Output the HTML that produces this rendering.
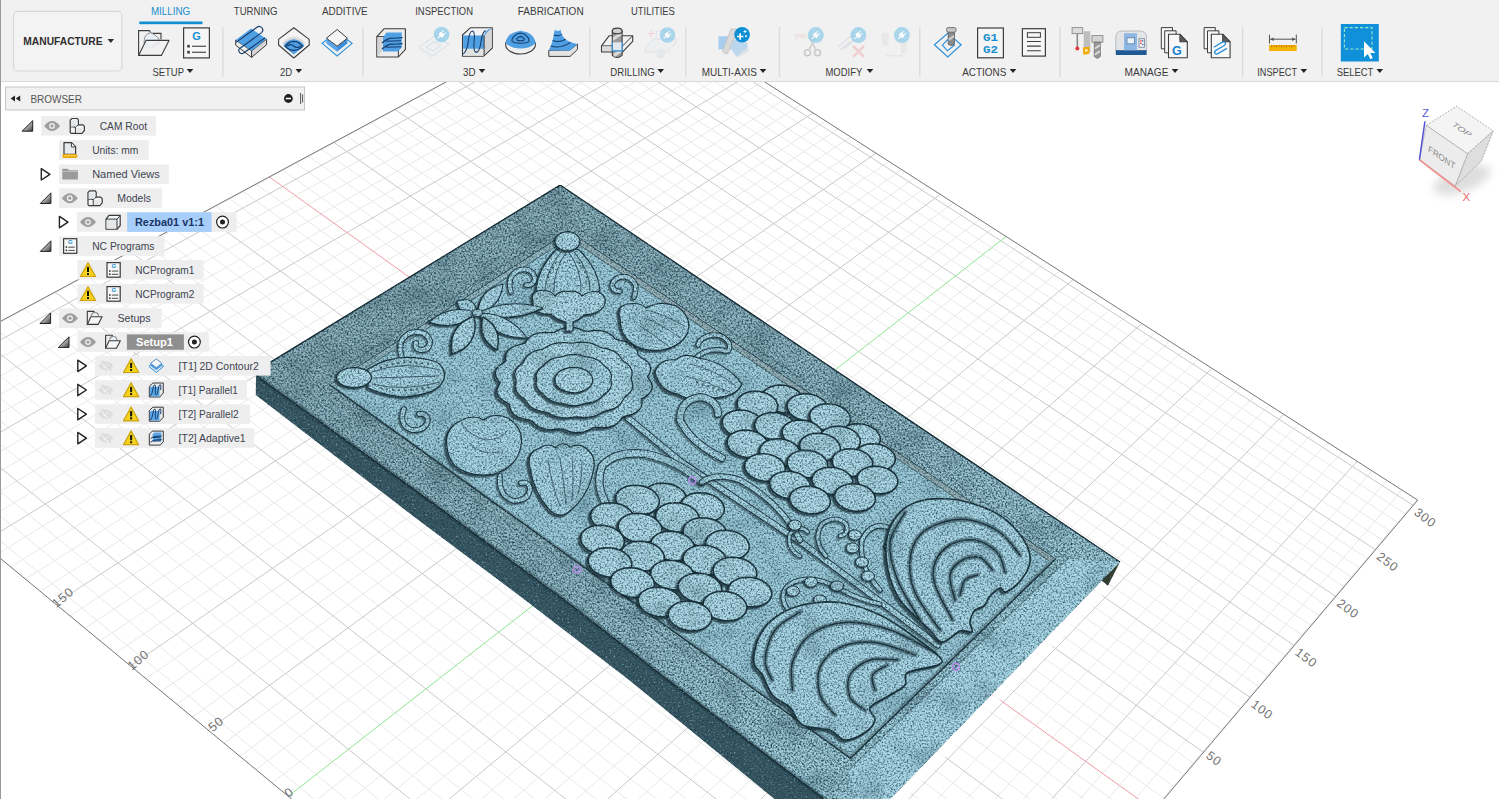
<!DOCTYPE html>
<html><head><meta charset="utf-8"><title>Fusion 360 - Manufacture</title>
<style>
html,body{margin:0;padding:0;background:#fff;}
body{width:1499px;height:799px;overflow:hidden;position:relative;font-family:"Liberation Sans",sans-serif;}
#canvas{position:absolute;left:0;top:0;width:1499px;height:799px;}
#toolbar{position:absolute;left:0;top:0;width:1499px;height:81px;background:#f1f1f1;border-bottom:1px solid #d9d9d9;}
#lborder{position:absolute;left:0;top:0;width:1px;height:799px;background:#9a9a9a;}
/*TOOLBAR_CSS*/
/*BROWSER_CSS*/
</style></head><body>
<svg id="canvas" width="1499" height="799" viewBox="0 0 1499 799">
<path d="M-172.8 415.3L619.9 -10.8M-145.4 438L643.3 4.2M-131.6 449.4L655.1 11.8M-161 408.2L814.2 1210.8M-117.7 460.9L667 19.4M-143.2 398.6L828.6 1193.8M-103.7 472.4L678.9 27M-125.6 389.2L842.9 1177.1M-75.6 495.6L702.8 42.3M-91.1 370.6L870.7 1144.3M-61.4 507.4L714.9 50M-74.1 361.5L884.4 1128.2M-47.1 519.2L727 57.8M-57.3 352.4L897.9 1112.3M-32.8 531L739.1 65.5M-40.7 343.5L911.2 1096.7M-3.8 554.9L763.5 81.2M-8 326L937.2 1066M10.8 567L775.8 89.1M8 317.3L950 1050.9M25.5 579.1L788.2 97M23.9 308.8L962.6 1036.1M40.2 591.3L800.6 104.9M39.6 300.4L975 1021.4M70 615.9L825.5 120.9M70.5 283.8L999.4 992.7M85 628.3L838.1 128.9M85.7 275.6L1011.4 978.6M100.1 640.8L850.7 137M100.8 267.5L1023.2 964.7M115.3 653.3L863.3 145.1M115.6 259.5L1034.9 950.9M145.9 678.7L888.8 161.4M144.9 243.8L1057.8 924M161.3 691.4L901.6 169.6M159.3 236L1069 910.7M176.9 704.3L914.5 177.9M173.6 228.4L1080.1 897.6M192.5 717.2L927.4 186.1M187.7 220.8L1091.1 884.7M224 743.2L953.4 202.8M215.5 205.9L1112.7 859.3M239.9 756.4L966.5 211.2M229.1 198.5L1123.2 846.9M255.9 769.6L979.7 219.6M242.7 191.2L1133.7 834.6M272 782.9L992.9 228M256.1 184L1144 822.4M304.5 809.7L1019.4 245.1M282.5 169.9L1164.3 798.5M320.9 823.3L1032.8 253.6M295.5 162.9L1174.3 786.7M337.4 836.9L1046.2 262.2M308.4 156L1184.2 775.1M353.9 850.6L1059.7 270.9M321.1 149.1L1193.9 763.6M387.4 878.2L1086.9 288.3M346.2 135.6L1213.1 741.1M404.3 892.2L1100.5 297M358.6 129L1222.5 730M421.3 906.2L1114.3 305.8M370.8 122.4L1231.8 719M438.3 920.3L1128.1 314.6M383 115.9L1241 708.2M472.8 948.8L1155.8 332.4M406.9 103L1259.1 686.8M490.2 963.2L1169.8 341.3M418.7 96.7L1268 676.3M507.7 977.7L1183.8 350.3M430.4 90.4L1276.9 666M525.3 992.2L1197.9 359.3M441.9 84.2L1285.6 655.7M560.9 1021.6L1226.3 377.5M464.8 71.9L1302.7 635.5M578.9 1036.4L1240.5 386.7M476 65.9L1311.2 625.6M596.9 1051.4L1254.9 395.8M487.2 59.9L1319.5 615.7M615.1 1066.4L1269.3 405.1M498.2 53.9L1327.8 606M651.8 1096.7L1298.3 423.6M520 42.2L1344 586.8M670.3 1112L1312.9 433M530.7 36.5L1352 577.4M688.9 1127.4L1327.6 442.4M541.4 30.7L1360 568.1M707.7 1142.9L1342.3 451.8M551.9 25.1L1367.8 558.8M745.6 1174.2L1372 470.8M572.7 13.9L1383.2 540.6M764.7 1190L1386.9 480.4M583 8.4L1390.9 531.7M783.9 1205.9L1401.9 490M593.2 2.9L1398.4 522.8M803.3 1221.9L1417 499.6M603.3 -2.5L1405.8 514" stroke="#e9e9e9" stroke-width="1" fill="none"/>
<path d="M-159.1 426.6L631.6 -3.3M-89.7 484L690.8 34.6M-108.3 379.8L856.9 1160.6M-18.3 542.9L751.3 73.3M-24.3 334.7L924.3 1081.2M55.1 603.6L813 112.9M55.2 292L987.3 1007M130.5 666L876 153.2M130.3 251.6L1046.4 937.4M208.2 730.2L940.4 194.4M201.6 213.3L1102 871.9M370.6 864.4L1073.3 279.5M333.7 142.3L1203.5 752.3M455.5 934.5L1141.9 323.5M395 109.4L1250.1 697.4M543.1 1006.9L1212 368.4M453.4 78L1294.2 645.5M633.4 1081.5L1283.8 414.3M509.1 48.1L1335.9 596.4M726.6 1158.5L1357.1 461.3M562.4 19.5L1375.6 549.7M613.3 -7.9L1413.2 505.4" stroke="#c9c9c9" stroke-width="1" fill="none"/>
<path d="M269.3 176.9L1154.2 810.4" stroke="#f09aa4" stroke-width="1" fill="none"/>
<path d="M288.2 796.3L1006.1 236.5" stroke="#8fe58f" stroke-width="1" fill="none"/>
<path d="M-173.4 414.8L619.3 -11.2L1417.7 500.1L804.2 1222.6Z" stroke="#767676" stroke-width="1" fill="none"/>
<text x="1214" y="758.8" transform="rotate(37 1214 758.8)" text-anchor="middle" font-size="12.5" fill="#727272" font-family="Liberation Sans, sans-serif" dominant-baseline="central" style="letter-spacing:1px">50</text>
<text x="1262.1" y="709.9" transform="rotate(37 1262.1 709.9)" text-anchor="middle" font-size="12.5" fill="#727272" font-family="Liberation Sans, sans-serif" dominant-baseline="central" style="letter-spacing:1px">100</text>
<text x="1306.2" y="658" transform="rotate(37 1306.2 658)" text-anchor="middle" font-size="12.5" fill="#727272" font-family="Liberation Sans, sans-serif" dominant-baseline="central" style="letter-spacing:1px">150</text>
<text x="1347.9" y="608.9" transform="rotate(37 1347.9 608.9)" text-anchor="middle" font-size="12.5" fill="#727272" font-family="Liberation Sans, sans-serif" dominant-baseline="central" style="letter-spacing:1px">200</text>
<text x="1387.6" y="562.2" transform="rotate(37 1387.6 562.2)" text-anchor="middle" font-size="12.5" fill="#727272" font-family="Liberation Sans, sans-serif" dominant-baseline="central" style="letter-spacing:1px">250</text>
<text x="1425.2" y="517.9" transform="rotate(37 1425.2 517.9)" text-anchor="middle" font-size="12.5" fill="#727272" font-family="Liberation Sans, sans-serif" dominant-baseline="central" style="letter-spacing:1px">300</text>
<text x="289.2" y="792.3" transform="rotate(-40 289.2 792.3)" text-anchor="middle" font-size="12.5" fill="#727272" font-family="Liberation Sans, sans-serif" dominant-baseline="central" style="letter-spacing:1px">0</text>
<text x="216.2" y="724.2" transform="rotate(-40 216.2 724.2)" text-anchor="middle" font-size="12.5" fill="#727272" font-family="Liberation Sans, sans-serif" dominant-baseline="central" style="letter-spacing:1px">50</text>
<text x="138.5" y="660" transform="rotate(-40 138.5 660)" text-anchor="middle" font-size="12.5" fill="#727272" font-family="Liberation Sans, sans-serif" dominant-baseline="central" style="letter-spacing:1px">100</text>
<text x="63.1" y="597.6" transform="rotate(-40 63.1 597.6)" text-anchor="middle" font-size="12.5" fill="#727272" font-family="Liberation Sans, sans-serif" dominant-baseline="central" style="letter-spacing:1px">150</text>
<text x="-10.3" y="536.9" transform="rotate(-40 -10.3 536.9)" text-anchor="middle" font-size="12.5" fill="#727272" font-family="Liberation Sans, sans-serif" dominant-baseline="central" style="letter-spacing:1px">200</text>

<defs>
<linearGradient id="gtop" gradientUnits="userSpaceOnUse" x1="480" y1="200" x2="900" y2="800"><stop offset="0" stop-color="#8db0bb"/><stop offset=".55" stop-color="#96bcc8"/><stop offset="1" stop-color="#a6d2e0"/></linearGradient>
<filter id="blur3" x="-20%" y="-20%" width="140%" height="140%"><feGaussianBlur stdDeviation="1.6"/></filter>
<filter id="spk" x="0" y="0" width="100%" height="100%" color-interpolation-filters="sRGB">
 <feTurbulence type="fractalNoise" baseFrequency="0.55" numOctaves="2" seed="7" result="n"/>
 <feColorMatrix in="n" type="matrix" values="0 0 0 0 0  0 0 0 0 0  0 0 0 0 0  2.3 0 0 0 -0.9" result="a"/>
 <feFlood flood-color="#1c3f4d"/><feComposite in2="a" operator="in" result="dark"/>
 <feTurbulence type="fractalNoise" baseFrequency="0.5" numOctaves="2" seed="23" result="n2"/>
 <feColorMatrix in="n2" type="matrix" values="0 0 0 0 0  0 0 0 0 0  0 0 0 0 0  0 2.0 0 0 -1.2" result="b"/>
 <feFlood flood-color="#c4f0ff"/><feComposite in2="b" operator="in" result="light"/>
 <feTurbulence type="fractalNoise" baseFrequency="0.035" numOctaves="2" seed="4" result="n3"/>
 <feColorMatrix in="n3" type="matrix" values="0 0 0 0 0  0 0 0 0 0  0 0 0 0 0  0 0 0.7 0 -0.32" result="c"/>
 <feFlood flood-color="#274752"/><feComposite in2="c" operator="in" result="blot"/>
 <feMerge><feMergeNode in="SourceGraphic"/><feMergeNode in="blot"/><feMergeNode in="light"/><feMergeNode in="dark"/></feMerge>
 <feComposite in2="SourceAlpha" operator="in"/>
</filter>
<filter id="spkI" x="0" y="0" width="100%" height="100%" color-interpolation-filters="sRGB">
 <feTurbulence type="fractalNoise" baseFrequency="0.55" numOctaves="2" seed="7" result="n"/>
 <feColorMatrix in="n" type="matrix" values="0 0 0 0 0  0 0 0 0 0  0 0 0 0 0  2.0 0 0 0 -0.86" result="a"/>
 <feFlood flood-color="#1c3f4d"/><feComposite in2="a" operator="in" result="dark"/>
 <feTurbulence type="fractalNoise" baseFrequency="0.5" numOctaves="2" seed="23" result="n2"/>
 <feColorMatrix in="n2" type="matrix" values="0 0 0 0 0  0 0 0 0 0  0 0 0 0 0  0 2.0 0 0 -1.2" result="b"/>
 <feFlood flood-color="#c4f0ff"/><feComposite in2="b" operator="in" result="light"/>
 <feTurbulence type="fractalNoise" baseFrequency="0.035" numOctaves="2" seed="4" result="n3"/>
 <feColorMatrix in="n3" type="matrix" values="0 0 0 0 0  0 0 0 0 0  0 0 0 0 0  0 0 0.6 0 -0.3" result="c"/>
 <feFlood flood-color="#274752"/><feComposite in2="c" operator="in" result="blot"/>
 <feMerge><feMergeNode in="SourceGraphic"/><feMergeNode in="blot"/><feMergeNode in="light"/><feMergeNode in="dark"/></feMerge>
 <feComposite in2="SourceAlpha" operator="in"/>
</filter>
</defs>
<path d="M1105.500 585L893.500 803" stroke="#fff" stroke-opacity=".85" stroke-width="10" fill="none" filter="url(#blur3)"/>
<g filter="url(#spk)"><polygon points="256,371 258,377 420,493.8 567.5,602.5 660,674 824.1,799 862.3,828.1 812,830 774.3,799 628.9,680 520,596.3 414.2,517 255.6,395" fill="#3d5b66"/>
<polygon points="560.1,185 1120.1,562 1101.5,581 862.3,828.1 824.1,799 660,674 567.5,602.5 420,493.8 258,377 256,371" fill="url(#gtop)"/>
<polyline points="258,377 420,493.8 567.5,602.5 660,674 824.1,799 862.3,828.1" fill="none" stroke="#1a2c32" stroke-opacity=".35" stroke-width="5"/>
<polyline points="862.3,828.1 824.1,799 660,674 567.5,602.5 420,493.8 258,377 256,371 560.1,185 1120.1,562" fill="none" stroke="#14242a" stroke-width="1.5" stroke-linejoin="round"/>
<polygon points="1120.1,562 1108,586 1101,580" fill="#3a3a22"/>
</g>
<g filter="url(#spkI)"><polygon points="1120.1,562 1101.5,581 862.3,828.1 848,770.3 1068,558.5" fill="#a8d6e5"/>
<polygon points="569.5,222.5 1068,558.5 848,770.3 316,385" fill="none" stroke="#1d3036" stroke-opacity=".5" stroke-width="1.3"/>
<polygon points="569,231.5 1055.5,559 850.5,758.4 330,385" fill="#9ccad9" stroke="#1d3036" stroke-width="1.5"/>
<polygon points="569,231.500 1055.500,559 1048.500,560.500 569,238" fill="#96b0b6"/>
<polygon points="569,231.500 330,385 337,386.300 569,238" fill="#98bac4"/>
<path d="M337 386.300L569 238L1048.500 560.500" fill="none" stroke="#1d3036" stroke-opacity=".6" stroke-width="1"/>
<path d="M332 387.500L850.500 756.500L1053 560.500" fill="none" stroke="#1d3036" stroke-opacity=".3" stroke-width="4"/>
<path d="M628 418L680 461L805 545L938 645" transform="translate(-1.4 1.4)" fill="none" stroke="#1e3138" stroke-opacity=".5" stroke-width="7.4" stroke-linecap="round"/><path d="M628 418L680 461L805 545L938 645" fill="none" stroke="#12262d" stroke-opacity=".9" stroke-width="7" stroke-linecap="round"/><path d="M628 418L680 461L805 545L938 645" fill="none" stroke="#a8d4e3" stroke-width="5" stroke-linecap="round"/>
<path d="M649.6 380L651.6 383.4L652.3 386.9L651.5 390.3L649.3 393.4L645.8 396.2L641.7 398.7L642.1 402.4L641.5 406L639.7 409.3L636.6 412L632.4 414.1L627.3 415.6L622.5 416.9L620.4 420.3L617.4 423.3L613.5 425.7L608.8 427.1L603.5 427.7L598 427.4L593 427.7L588.8 430.1L584.1 431.8L579 432.6L573.8 432.5L568.7 431.3L564 429.4L559.2 428.7L553.8 429.5L548.5 429.6L543.4 428.7L539 426.9L535.3 424.3L532.4 421.2L528.1 419.6L522.8 418.7L518 417.1L514.1 414.8L511.5 411.8L510 408.3L509.5 404.7L506.2 402.2L502 399.8L498.9 396.9L497.2 393.6L496.9 390.2L498.1 386.6L500.1 383.2L498 380L496 376.6L495.3 373.1L496.1 369.7L498.3 366.6L501.8 363.8L505.9 361.3L505.5 357.6L506.1 354L507.9 350.7L511 348L515.2 345.9L520.3 344.4L525.1 343.1L527.2 339.7L530.2 336.7L534.1 334.3L538.8 332.9L544.1 332.3L549.6 332.6L554.6 332.3L558.8 329.9L563.5 328.2L568.6 327.4L573.8 327.5L578.9 328.7L583.6 330.6L588.4 331.3L593.8 330.5L599.1 330.4L604.2 331.3L608.6 333.1L612.3 335.7L615.2 338.8L619.5 340.4L624.8 341.3L629.6 342.9L633.5 345.2L636.1 348.2L637.6 351.7L638.1 355.3L641.4 357.8L645.6 360.2L648.7 363.1L650.4 366.4L650.7 369.8L649.5 373.4L647.5 376.8Z" transform="translate(-2.4 2.1)" fill="#16282f" fill-opacity=".62" stroke="#16282f" stroke-opacity=".5" stroke-width="2.4"/><path d="M649.6 380L651.6 383.4L652.3 386.9L651.5 390.3L649.3 393.4L645.8 396.2L641.7 398.7L642.1 402.4L641.5 406L639.7 409.3L636.6 412L632.4 414.1L627.3 415.6L622.5 416.9L620.4 420.3L617.4 423.3L613.5 425.7L608.8 427.1L603.5 427.7L598 427.4L593 427.7L588.8 430.1L584.1 431.8L579 432.6L573.8 432.5L568.7 431.3L564 429.4L559.2 428.7L553.8 429.5L548.5 429.6L543.4 428.7L539 426.9L535.3 424.3L532.4 421.2L528.1 419.6L522.8 418.7L518 417.1L514.1 414.8L511.5 411.8L510 408.3L509.5 404.7L506.2 402.2L502 399.8L498.9 396.9L497.2 393.6L496.9 390.2L498.1 386.6L500.1 383.2L498 380L496 376.6L495.3 373.1L496.1 369.7L498.3 366.6L501.8 363.8L505.9 361.3L505.5 357.6L506.1 354L507.9 350.7L511 348L515.2 345.9L520.3 344.4L525.1 343.1L527.2 339.7L530.2 336.7L534.1 334.3L538.8 332.9L544.1 332.3L549.6 332.6L554.6 332.3L558.8 329.9L563.5 328.2L568.6 327.4L573.8 327.5L578.9 328.7L583.6 330.6L588.4 331.3L593.8 330.5L599.1 330.4L604.2 331.3L608.6 333.1L612.3 335.7L615.2 338.8L619.5 340.4L624.8 341.3L629.6 342.9L633.5 345.2L636.1 348.2L637.6 351.7L638.1 355.3L641.4 357.8L645.6 360.2L648.7 363.1L650.4 366.4L650.7 369.8L649.5 373.4L647.5 376.8Z" fill="#a8d4e3" stroke="#12262d" stroke-width="1.3" stroke-opacity=".95" stroke-linejoin="round" />
<path d="M631.4 380L632.4 382.5L632.8 385L632.6 387.5L631.7 390L630.1 392.3L628 394.4L625.4 396.3L623.7 398.5L622.6 400.9L621 403.2L618.9 405.4L616.2 407.2L613 408.7L609.5 409.9L605.8 410.7L602.6 412L599.8 413.8L596.6 415.3L593.1 416.4L589.3 417.2L585.4 417.4L581.5 417.3L577.6 416.9L573.8 417L570 417.6L566 417.9L562.1 417.7L558.3 417.2L554.7 416.1L551.4 414.8L548.3 413.1L545 412L541.2 411.3L537.6 410.3L534.3 408.9L531.4 407.2L529.1 405.2L527.3 402.9L525.9 400.5L523.9 398.5L521.2 396.7L518.8 394.6L517 392.4L515.9 390L515.5 387.4L515.6 384.9L516.3 382.4L516.2 380L515.2 377.5L514.8 375L515 372.5L515.9 370L517.5 367.7L519.6 365.6L522.2 363.7L523.9 361.5L525 359.1L526.6 356.8L528.7 354.6L531.4 352.8L534.6 351.3L538.1 350.1L541.8 349.3L545 348L547.8 346.2L551 344.7L554.5 343.6L558.3 342.8L562.2 342.6L566.1 342.7L570 343.1L573.8 343L577.6 342.4L581.6 342.1L585.5 342.3L589.3 342.8L592.9 343.9L596.2 345.2L599.3 346.9L602.6 348L606.4 348.7L610 349.7L613.3 351.1L616.2 352.8L618.5 354.8L620.3 357.1L621.7 359.5L623.7 361.5L626.4 363.3L628.8 365.4L630.6 367.6L631.7 370L632.1 372.6L632 375.1L631.3 377.6Z" transform="translate(-2.1 1.8)" fill="#16282f" fill-opacity=".62" stroke="#16282f" stroke-opacity=".5" stroke-width="2.4"/><path d="M631.4 380L632.4 382.5L632.8 385L632.6 387.5L631.7 390L630.1 392.3L628 394.4L625.4 396.3L623.7 398.5L622.6 400.9L621 403.2L618.9 405.4L616.2 407.2L613 408.7L609.5 409.9L605.8 410.7L602.6 412L599.8 413.8L596.6 415.3L593.1 416.4L589.3 417.2L585.4 417.4L581.5 417.3L577.6 416.9L573.8 417L570 417.6L566 417.9L562.1 417.7L558.3 417.2L554.7 416.1L551.4 414.8L548.3 413.1L545 412L541.2 411.3L537.6 410.3L534.3 408.9L531.4 407.2L529.1 405.2L527.3 402.9L525.9 400.5L523.9 398.5L521.2 396.7L518.8 394.6L517 392.4L515.9 390L515.5 387.4L515.6 384.9L516.3 382.4L516.2 380L515.2 377.5L514.8 375L515 372.5L515.9 370L517.5 367.7L519.6 365.6L522.2 363.7L523.9 361.5L525 359.1L526.6 356.8L528.7 354.6L531.4 352.8L534.6 351.3L538.1 350.1L541.8 349.3L545 348L547.8 346.2L551 344.7L554.5 343.6L558.3 342.8L562.2 342.6L566.1 342.7L570 343.1L573.8 343L577.6 342.4L581.6 342.1L585.5 342.3L589.3 342.8L592.9 343.9L596.2 345.2L599.3 346.9L602.6 348L606.4 348.7L610 349.7L613.3 351.1L616.2 352.8L618.5 354.8L620.3 357.1L621.7 359.5L623.7 361.5L626.4 363.3L628.8 365.4L630.6 367.6L631.7 370L632.1 372.6L632 375.1L631.3 377.6Z" fill="#aed8e6" stroke="#12262d" stroke-width="1.2" stroke-opacity=".95" stroke-linejoin="round" />
<path d="M610.8 380L611.3 382.2L611.4 384.4L610.9 386.6L610 388.7L608.4 390.7L606.5 392.5L604.2 394.1L602.5 396L600.7 397.8L598.5 399.5L595.9 400.9L592.9 402L589.8 402.7L586.5 403.2L583.5 403.9L580.4 404.8L577.1 405.3L573.8 405.5L570.5 405.3L567.2 404.8L564.1 403.9L561.1 403.2L557.8 402.7L554.7 402L551.7 400.9L549.1 399.5L546.9 397.8L545.1 396L543.4 394.1L541.1 392.5L539.2 390.7L537.6 388.7L536.7 386.6L536.2 384.4L536.3 382.2L536.8 380L536.3 377.8L536.2 375.6L536.7 373.4L537.6 371.3L539.2 369.3L541.1 367.5L543.4 365.9L545.1 364L546.9 362.2L549.1 360.5L551.7 359.1L554.7 358L557.8 357.3L561.1 356.8L564.1 356.1L567.2 355.2L570.5 354.7L573.8 354.5L577.1 354.7L580.4 355.2L583.5 356.1L586.5 356.8L589.8 357.3L592.9 358L595.9 359.1L598.5 360.5L600.7 362.2L602.5 364L604.2 365.9L606.5 367.5L608.4 369.3L610 371.3L610.9 373.4L611.4 375.6L611.3 377.8Z" transform="translate(-1.9 1.7)" fill="#16282f" fill-opacity=".62" stroke="#16282f" stroke-opacity=".5" stroke-width="2.4"/><path d="M610.8 380L611.3 382.2L611.4 384.4L610.9 386.6L610 388.7L608.4 390.7L606.5 392.5L604.2 394.1L602.5 396L600.7 397.8L598.5 399.5L595.9 400.9L592.9 402L589.8 402.7L586.5 403.2L583.5 403.9L580.4 404.8L577.1 405.3L573.8 405.5L570.5 405.3L567.2 404.8L564.1 403.9L561.1 403.2L557.8 402.7L554.7 402L551.7 400.9L549.1 399.5L546.9 397.8L545.1 396L543.4 394.1L541.1 392.5L539.2 390.7L537.6 388.7L536.7 386.6L536.2 384.4L536.3 382.2L536.8 380L536.3 377.8L536.2 375.6L536.7 373.4L537.6 371.3L539.2 369.3L541.1 367.5L543.4 365.9L545.1 364L546.9 362.2L549.1 360.5L551.7 359.1L554.7 358L557.8 357.3L561.1 356.8L564.1 356.1L567.2 355.2L570.5 354.7L573.8 354.5L577.1 354.7L580.4 355.2L583.5 356.1L586.5 356.8L589.8 357.3L592.9 358L595.9 359.1L598.5 360.5L600.7 362.2L602.5 364L604.2 365.9L606.5 367.5L608.4 369.3L610 371.3L610.9 373.4L611.4 375.6L611.3 377.8Z" fill="#a8d4e3" stroke="#12262d" stroke-width="1.2" stroke-opacity=".95" stroke-linejoin="round" />
<path d="M592.8 380L592.3 382.8L590.9 385.5L588.7 387.9L585.6 389.9L582 391.4L578 392.3L573.8 392.6L569.6 392.3L565.6 391.4L562 389.9L558.9 387.9L556.7 385.5L555.3 382.8L554.8 380L555.3 377.2L556.7 374.5L558.9 372.1L562 370.1L565.6 368.6L569.6 367.7L573.8 367.4L578 367.7L582 368.6L585.6 370.1L588.7 372.1L590.9 374.5L592.3 377.2Z" transform="translate(-1.6 1.4)" fill="#16282f" fill-opacity=".62" stroke="#16282f" stroke-opacity=".5" stroke-width="2.4"/><path d="M592.8 380L592.3 382.8L590.9 385.5L588.7 387.9L585.6 389.9L582 391.4L578 392.3L573.8 392.6L569.6 392.3L565.6 391.4L562 389.9L558.9 387.9L556.7 385.5L555.3 382.8L554.8 380L555.3 377.2L556.7 374.5L558.9 372.1L562 370.1L565.6 368.6L569.6 367.7L573.8 367.4L578 367.7L582 368.6L585.6 370.1L588.7 372.1L590.9 374.5L592.3 377.2Z" fill="#aed8e6" stroke="#12262d" stroke-width="1.2" stroke-opacity=".95" stroke-linejoin="round" />
<path d="M556 250Q538 268 536 290L546 298L568 303L592 298L600 290Q598 268 579 250Q567 244 556 250Z" transform="translate(-1.9 1.7)" fill="#16282f" fill-opacity=".62" stroke="#16282f" stroke-opacity=".5" stroke-width="2.4"/><path d="M556 250Q538 268 536 290L546 298L568 303L592 298L600 290Q598 268 579 250Q567 244 556 250Z" fill="#a8d4e3" stroke="#12262d" stroke-width="1.2" stroke-opacity=".95" stroke-linejoin="round" />
<path d="M567 251Q553 270 554 292M568 251Q582 270 581 292M561 252Q546 270 545 290M574 252Q590 270 590 290" fill="none" stroke="#12262d" stroke-width="1" stroke-opacity="0.7" stroke-linecap="round"/>
<path d="M556 262l-6 10l-3 10M579 262l6 10l3 10" fill="none" stroke="#1c2d33" stroke-width="2" stroke-dasharray="2 3.4" stroke-opacity=".7"/>
<path d="M580 241.3L579.7 243.4L578.8 245.5L577.3 247.3L575.3 248.8L572.9 249.9L570.3 250.7L567.5 250.9L564.7 250.7L562.1 249.9L559.7 248.8L557.7 247.3L556.2 245.5L555.3 243.4L555 241.3L555.3 239.2L556.2 237.1L557.7 235.3L559.7 233.8L562.1 232.7L564.7 231.9L567.5 231.7L570.3 231.9L572.9 232.7L575.3 233.8L577.3 235.3L578.8 237.1L579.7 239.2Z" transform="translate(-1.6 1.4)" fill="#16282f" fill-opacity=".62" stroke="#16282f" stroke-opacity=".5" stroke-width="2.4"/><path d="M580 241.3L579.7 243.4L578.8 245.5L577.3 247.3L575.3 248.8L572.9 249.9L570.3 250.7L567.5 250.9L564.7 250.7L562.1 249.9L559.7 248.8L557.7 247.3L556.2 245.5L555.3 243.4L555 241.3L555.3 239.2L556.2 237.1L557.7 235.3L559.7 233.8L562.1 232.7L564.7 231.9L567.5 231.7L570.3 231.9L572.9 232.7L575.3 233.8L577.3 235.3L578.8 237.1L579.7 239.2Z" fill="#aed8e6" stroke="#12262d" stroke-width="1.3" stroke-opacity=".95" stroke-linejoin="round" />
<path d="M533 301Q530 292 540 290.500Q550 289 555 296Q561 290 568 291.500Q577 290 582 296Q590 290 599 292Q608 297 604 306Q598 315 585 314.500Q579 320 573 322L573 331L566 331L566 322Q556 320 551 314Q538 315 533 307Z" transform="translate(-1.9 1.7)" fill="#16282f" fill-opacity=".62" stroke="#16282f" stroke-opacity=".5" stroke-width="2.4"/><path d="M533 301Q530 292 540 290.500Q550 289 555 296Q561 290 568 291.500Q577 290 582 296Q590 290 599 292Q608 297 604 306Q598 315 585 314.500Q579 320 573 322L573 331L566 331L566 322Q556 320 551 314Q538 315 533 307Z" fill="#aed8e6" stroke="#12262d" stroke-width="1.2" stroke-opacity=".95" stroke-linejoin="round" />
<path d="M511 292Q506 276 519 270Q532 267 535 278Q534 286 526 285" transform="translate(-1.4 1.4)" fill="none" stroke="#1e3138" stroke-opacity=".5" stroke-width="6" stroke-linecap="round"/><path d="M511 292Q506 276 519 270Q532 267 535 278Q534 286 526 285" fill="none" stroke="#12262d" stroke-opacity=".9" stroke-width="5.6" stroke-linecap="round"/><path d="M511 292Q506 276 519 270Q532 267 535 278Q534 286 526 285" fill="none" stroke="#a8d4e3" stroke-width="3.6" stroke-linecap="round"/>
<path d="M634 297Q640 282 627 277Q615 275 612 285Q613 292 620 291" transform="translate(-1.4 1.4)" fill="none" stroke="#1e3138" stroke-opacity=".5" stroke-width="6" stroke-linecap="round"/><path d="M634 297Q640 282 627 277Q615 275 612 285Q613 292 620 291" fill="none" stroke="#12262d" stroke-opacity=".9" stroke-width="5.6" stroke-linecap="round"/><path d="M634 297Q640 282 627 277Q615 275 612 285Q613 292 620 291" fill="none" stroke="#a8d4e3" stroke-width="3.6" stroke-linecap="round"/>
<path d="M477.5 313Q474.3 294.9 457 301Q460.2 319.1 477.5 313Z" transform="translate(-1.6 1.4)" fill="#16282f" fill-opacity=".62" stroke="#16282f" stroke-opacity=".5" stroke-width="2.4"/><path d="M477.5 313Q474.3 294.9 457 301Q460.2 319.1 477.5 313Z" fill="#a8d4e3" stroke="#12262d" stroke-width="1.1" stroke-opacity=".95" stroke-linejoin="round" />
<path d="M477.5 313Q500.8 307.7 503 284Q479.7 289.3 477.5 313Z" transform="translate(-1.6 1.4)" fill="#16282f" fill-opacity=".62" stroke="#16282f" stroke-opacity=".5" stroke-width="2.4"/><path d="M477.5 313Q500.8 307.7 503 284Q479.7 289.3 477.5 313Z" fill="#a8d4e3" stroke="#12262d" stroke-width="1.1" stroke-opacity=".95" stroke-linejoin="round" />
<path d="M477.5 313Q450.5 302.8 429 322Q456 332.2 477.5 313Z" transform="translate(-1.6 1.4)" fill="#16282f" fill-opacity=".62" stroke="#16282f" stroke-opacity=".5" stroke-width="2.4"/><path d="M477.5 313Q450.5 302.8 429 322Q456 332.2 477.5 313Z" fill="#a8d4e3" stroke="#12262d" stroke-width="1.1" stroke-opacity=".95" stroke-linejoin="round" />
<path d="M477.5 313Q511.2 323.5 543 308Q509.3 297.5 477.5 313Z" transform="translate(-1.6 1.4)" fill="#16282f" fill-opacity=".62" stroke="#16282f" stroke-opacity=".5" stroke-width="2.4"/><path d="M477.5 313Q511.2 323.5 543 308Q509.3 297.5 477.5 313Z" fill="#a8d4e3" stroke="#12262d" stroke-width="1.1" stroke-opacity=".95" stroke-linejoin="round" />
<path d="M477.5 313Q495.5 338.9 527 338Q509 312.1 477.5 313Z" transform="translate(-1.6 1.4)" fill="#16282f" fill-opacity=".62" stroke="#16282f" stroke-opacity=".5" stroke-width="2.4"/><path d="M477.5 313Q495.5 338.9 527 338Q509 312.1 477.5 313Z" fill="#a8d4e3" stroke="#12262d" stroke-width="1.1" stroke-opacity=".95" stroke-linejoin="round" />
<path d="M474 316Q447.4 326 452 354Q480.3 345 474 316Z" transform="translate(-1.9 1.7)" fill="#16282f" fill-opacity=".62" stroke="#16282f" stroke-opacity=".5" stroke-width="2.4"/><path d="M474 316Q447.4 326 452 354Q480.3 345 474 316Z" fill="#aed8e6" stroke="#12262d" stroke-width="1.5" stroke-opacity=".95" stroke-linejoin="round" />
<path d="M483 317Q477.1 339 497 350Q502.9 328 483 317Z" transform="translate(-1.9 1.7)" fill="#16282f" fill-opacity=".62" stroke="#16282f" stroke-opacity=".5" stroke-width="2.4"/><path d="M483 317Q477.1 339 497 350Q502.9 328 483 317Z" fill="#aed8e6" stroke="#12262d" stroke-width="1.5" stroke-opacity=".95" stroke-linejoin="round" />
<path d="M482.5 313L482.4 313.8L482 314.6L481.4 315.2L480.6 315.8L479.7 316.2L478.6 316.5L477.5 316.6L476.4 316.5L475.3 316.2L474.4 315.8L473.6 315.2L473 314.6L472.6 313.8L472.5 313L472.6 312.2L473 311.4L473.6 310.8L474.4 310.2L475.3 309.8L476.4 309.5L477.5 309.4L478.6 309.5L479.7 309.8L480.6 310.2L481.4 310.8L482 311.4L482.4 312.2Z" transform="translate(-1 0.8)" fill="#16282f" fill-opacity=".62" stroke="#16282f" stroke-opacity=".5" stroke-width="2.4"/><path d="M482.5 313L482.4 313.8L482 314.6L481.4 315.2L480.6 315.8L479.7 316.2L478.6 316.5L477.5 316.6L476.4 316.5L475.3 316.2L474.4 315.8L473.6 315.2L473 314.6L472.6 313.8L472.5 313L472.6 312.2L473 311.4L473.6 310.8L474.4 310.2L475.3 309.8L476.4 309.5L477.5 309.4L478.6 309.5L479.7 309.8L480.6 310.2L481.4 310.8L482 311.4L482.4 312.2Z" fill="#aed8e6" stroke="#12262d" stroke-width="1" stroke-opacity=".95" stroke-linejoin="round" />
<path d="M402 358Q396 340 410 333Q426 329 430 341Q430 350 421 350Q414 349 416 343" transform="translate(-1.4 1.4)" fill="none" stroke="#1e3138" stroke-opacity=".5" stroke-width="6.4" stroke-linecap="round"/><path d="M402 358Q396 340 410 333Q426 329 430 341Q430 350 421 350Q414 349 416 343" fill="none" stroke="#12262d" stroke-opacity=".9" stroke-width="6" stroke-linecap="round"/><path d="M402 358Q396 340 410 333Q426 329 430 341Q430 350 421 350Q414 349 416 343" fill="none" stroke="#a8d4e3" stroke-width="4" stroke-linecap="round"/>
<path d="M368 369Q398 350 437 362Q448 371 443 381Q438 394 404 397Q383 395 368 388Z" transform="translate(-1.9 1.7)" fill="#16282f" fill-opacity=".62" stroke="#16282f" stroke-opacity=".5" stroke-width="2.4"/><path d="M368 369Q398 350 437 362Q448 371 443 381Q438 394 404 397Q383 395 368 388Z" fill="#a8d4e3" stroke="#12262d" stroke-width="1.2" stroke-opacity=".95" stroke-linejoin="round" />
<path d="M372 372Q404 360 440 370M372 384Q404 392 440 382M374 378L438 376" fill="none" stroke="#12262d" stroke-width="1" stroke-opacity="0.7" stroke-linecap="round"/>
<path d="M380 368Q405 358 432 365M380 388Q405 393 432 387" fill="none" stroke="#1c2d33" stroke-width="2" stroke-dasharray="2 4" stroke-opacity=".7"/>
<path d="M371.5 377.5L371.1 379.7L369.8 381.8L367.7 383.7L364.9 385.3L361.6 386.5L357.9 387.2L354 387.5L350.1 387.2L346.4 386.5L343.1 385.3L340.3 383.7L338.2 381.8L336.9 379.7L336.5 377.5L336.9 375.3L338.2 373.2L340.3 371.3L343.1 369.7L346.4 368.5L350.1 367.8L354 367.5L357.9 367.8L361.6 368.5L364.9 369.7L367.7 371.3L369.8 373.2L371.1 375.3Z" transform="translate(-1.8 1.5)" fill="#16282f" fill-opacity=".62" stroke="#16282f" stroke-opacity=".5" stroke-width="2.4"/><path d="M371.5 377.5L371.1 379.7L369.8 381.8L367.7 383.7L364.9 385.3L361.6 386.5L357.9 387.2L354 387.5L350.1 387.2L346.4 386.5L343.1 385.3L340.3 383.7L338.2 381.8L336.9 379.7L336.5 377.5L336.9 375.3L338.2 373.2L340.3 371.3L343.1 369.7L346.4 368.5L350.1 367.8L354 367.5L357.9 367.8L361.6 368.5L364.9 369.7L367.7 371.3L369.8 373.2L371.1 375.3Z" fill="#aed8e6" stroke="#12262d" stroke-width="1.3" stroke-opacity=".95" stroke-linejoin="round" />
<path d="M404 409Q398 425 412 430Q426 431 428 420Q427 413 419 414" transform="translate(-1.4 1.4)" fill="none" stroke="#1e3138" stroke-opacity=".5" stroke-width="6.2" stroke-linecap="round"/><path d="M404 409Q398 425 412 430Q426 431 428 420Q427 413 419 414" fill="none" stroke="#12262d" stroke-opacity=".9" stroke-width="5.8" stroke-linecap="round"/><path d="M404 409Q398 425 412 430Q426 431 428 420Q427 413 419 414" fill="none" stroke="#a8d4e3" stroke-width="3.8" stroke-linecap="round"/>
<path d="M447 447Q444 428 462 420Q474 414 484 420Q494 412 508 418Q524 428 521 446Q518 466 494 474Q470 478 455 466Q448 458 447 447Z" transform="translate(-2.1 1.8)" fill="#16282f" fill-opacity=".62" stroke="#16282f" stroke-opacity=".5" stroke-width="2.4"/><path d="M447 447Q444 428 462 420Q474 414 484 420Q494 412 508 418Q524 428 521 446Q518 466 494 474Q470 478 455 466Q448 458 447 447Z" fill="#a8d4e3" stroke="#12262d" stroke-width="1.2" stroke-opacity=".95" stroke-linejoin="round" />
<path d="M462 424Q470 436 486 440Q500 440 508 430M470 444Q482 456 500 452" fill="none" stroke="#12262d" stroke-width="1" stroke-opacity="0.6" stroke-linecap="round"/>
<path d="M530 468Q526 452 540 448Q548 442 556 448Q562 440 570 447Q580 442 588 450Q597 458 593 472Q588 498 566 514Q556 518 548 508Q534 492 530 468Z" transform="translate(-2.1 1.8)" fill="#16282f" fill-opacity=".62" stroke="#16282f" stroke-opacity=".5" stroke-width="2.4"/><path d="M530 468Q526 452 540 448Q548 442 556 448Q562 440 570 447Q580 442 588 450Q597 458 593 472Q588 498 566 514Q556 518 548 508Q534 492 530 468Z" fill="#a8d4e3" stroke="#12262d" stroke-width="1.2" stroke-opacity=".95" stroke-linejoin="round" />
<path d="M548 460Q552 486 560 506M560 458Q564 484 566 504M572 458Q574 480 572 500M582 462Q582 480 578 494" fill="none" stroke="#12262d" stroke-width="1" stroke-opacity="0.6" stroke-linecap="round"/>
<path d="M500 476Q498 496 514 501Q530 500 530 488Q528 481 521 483" transform="translate(-1.4 1.4)" fill="none" stroke="#1e3138" stroke-opacity=".5" stroke-width="6.2" stroke-linecap="round"/><path d="M500 476Q498 496 514 501Q530 500 530 488Q528 481 521 483" fill="none" stroke="#12262d" stroke-opacity=".9" stroke-width="5.8" stroke-linecap="round"/><path d="M500 476Q498 496 514 501Q530 500 530 488Q528 481 521 483" fill="none" stroke="#a8d4e3" stroke-width="3.8" stroke-linecap="round"/>
<path d="M620 318Q616 306 628 304Q640 302 646 308Q660 300 676 306Q692 316 688 332Q682 346 662 350Q640 352 630 342Q620 334 620 318Z" transform="translate(-1.9 1.7)" fill="#16282f" fill-opacity=".62" stroke="#16282f" stroke-opacity=".5" stroke-width="2.4"/><path d="M620 318Q616 306 628 304Q640 302 646 308Q660 300 676 306Q692 316 688 332Q682 346 662 350Q640 352 630 342Q620 334 620 318Z" fill="#a8d4e3" stroke="#12262d" stroke-width="1.2" stroke-opacity=".95" stroke-linejoin="round" />
<path d="M646 310Q664 314 684 326M644 318Q662 324 680 338M640 326Q656 336 668 346" fill="none" stroke="#12262d" stroke-width="1" stroke-opacity="0.6" stroke-linecap="round"/>
<path d="M694 360Q704 348 722 350Q732 354 729 343Q724 334 712 335Q700 337 698 345" transform="translate(-1.4 1.4)" fill="none" stroke="#1e3138" stroke-opacity=".5" stroke-width="5.8" stroke-linecap="round"/><path d="M694 360Q704 348 722 350Q732 354 729 343Q724 334 712 335Q700 337 698 345" fill="none" stroke="#12262d" stroke-opacity=".9" stroke-width="5.4" stroke-linecap="round"/><path d="M694 360Q704 348 722 350Q732 354 729 343Q724 334 712 335Q700 337 698 345" fill="none" stroke="#a8d4e3" stroke-width="3.4" stroke-linecap="round"/>
<path d="M655 372Q660 358 676 360Q684 352 698 358Q726 362 742 384Q736 398 708 398Q690 402 678 394Q660 392 655 372Z" transform="translate(-1.9 1.7)" fill="#16282f" fill-opacity=".62" stroke="#16282f" stroke-opacity=".5" stroke-width="2.4"/><path d="M655 372Q660 358 676 360Q684 352 698 358Q726 362 742 384Q736 398 708 398Q690 402 678 394Q660 392 655 372Z" fill="#a8d4e3" stroke="#12262d" stroke-width="1.2" stroke-opacity=".95" stroke-linejoin="round" />
<path d="M690 364Q716 370 736 386M686 376Q708 382 730 392" fill="none" stroke="#12262d" stroke-width="1" stroke-opacity="0.6" stroke-linecap="round"/>
<path d="M696 382Q712 388 726 392" fill="none" stroke="#1c2d33" stroke-width="2" stroke-dasharray="2 3.6" stroke-opacity=".7"/>
<path d="M722 458Q690 442 680 420Q680 400 700 397Q718 400 718 414" transform="translate(-1.4 1.4)" fill="none" stroke="#1e3138" stroke-opacity=".5" stroke-width="8.4" stroke-linecap="round"/><path d="M722 458Q690 442 680 420Q680 400 700 397Q718 400 718 414" fill="none" stroke="#12262d" stroke-opacity=".9" stroke-width="8" stroke-linecap="round"/><path d="M722 458Q690 442 680 420Q680 400 700 397Q718 400 718 414" fill="none" stroke="#a8d4e3" stroke-width="6" stroke-linecap="round"/>
<path d="M610 510Q594 488 602 466Q616 450 646 454Q676 460 702 482" transform="translate(-1.4 1.4)" fill="none" stroke="#1e3138" stroke-opacity=".5" stroke-width="8.8" stroke-linecap="round"/><path d="M610 510Q594 488 602 466Q616 450 646 454Q676 460 702 482" fill="none" stroke="#12262d" stroke-opacity=".9" stroke-width="8.4" stroke-linecap="round"/><path d="M610 510Q594 488 602 466Q616 450 646 454Q676 460 702 482" fill="none" stroke="#a8d4e3" stroke-width="6.4" stroke-linecap="round"/>
<path d="M702 482Q716 472 740 480Q780 502 800 540" transform="translate(-1.4 1.4)" fill="none" stroke="#1e3138" stroke-opacity=".5" stroke-width="6.8" stroke-linecap="round"/><path d="M702 482Q716 472 740 480Q780 502 800 540" fill="none" stroke="#12262d" stroke-opacity=".9" stroke-width="6.4" stroke-linecap="round"/><path d="M702 482Q716 472 740 480Q780 502 800 540" fill="none" stroke="#a8d4e3" stroke-width="4.4" stroke-linecap="round"/>
<path d="M802.8 401.7L801.9 404.6L800 407.2L797.2 409.4L793.7 411.1L789.6 412.2L785.2 412.6L780.6 412.3L776.1 411.3L772 409.7L768.4 407.6L765.4 405L763.4 402.1L762.3 399L762.2 395.9L763.1 393L765 390.4L767.8 388.2L771.3 386.5L775.4 385.4L779.8 385L784.4 385.3L788.9 386.3L793 387.9L796.6 390L799.6 392.6L801.6 395.5L802.7 398.6Z" transform="translate(-2.1 1.8)" fill="#16282f" fill-opacity=".62" stroke="#16282f" stroke-opacity=".5" stroke-width="2.4"/><path d="M802.8 401.7L801.9 404.6L800 407.2L797.2 409.4L793.7 411.1L789.6 412.2L785.2 412.6L780.6 412.3L776.1 411.3L772 409.7L768.4 407.6L765.4 405L763.4 402.1L762.3 399L762.2 395.9L763.1 393L765 390.4L767.8 388.2L771.3 386.5L775.4 385.4L779.8 385L784.4 385.3L788.9 386.3L793 387.9L796.6 390L799.6 392.6L801.6 395.5L802.7 398.6Z" fill="#aed8e6" stroke="#12262d" stroke-width="1.6" stroke-opacity=".95" stroke-linejoin="round" />
<path d="M777.8 407.9L776.9 410.8L775 413.4L772.2 415.6L768.7 417.3L764.6 418.4L760.2 418.8L755.6 418.5L751.1 417.5L747 415.9L743.4 413.8L740.4 411.2L738.4 408.3L737.3 405.2L737.2 402.1L738.1 399.2L740 396.6L742.8 394.4L746.3 392.7L750.4 391.6L754.8 391.2L759.4 391.5L763.9 392.5L768 394.1L771.6 396.2L774.6 398.8L776.6 401.7L777.7 404.8Z" transform="translate(-2.1 1.8)" fill="#16282f" fill-opacity=".62" stroke="#16282f" stroke-opacity=".5" stroke-width="2.4"/><path d="M777.8 407.9L776.9 410.8L775 413.4L772.2 415.6L768.7 417.3L764.6 418.4L760.2 418.8L755.6 418.5L751.1 417.5L747 415.9L743.4 413.8L740.4 411.2L738.4 408.3L737.3 405.2L737.2 402.1L738.1 399.2L740 396.6L742.8 394.4L746.3 392.7L750.4 391.6L754.8 391.2L759.4 391.5L763.9 392.5L768 394.1L771.6 396.2L774.6 398.8L776.6 401.7L777.7 404.8Z" fill="#aed8e6" stroke="#12262d" stroke-width="1.6" stroke-opacity=".95" stroke-linejoin="round" />
<path d="M827.8 410.4L826.9 413.3L825 415.9L822.2 418.1L818.7 419.8L814.6 420.9L810.2 421.3L805.6 421L801.1 420L797 418.4L793.4 416.3L790.4 413.7L788.4 410.8L787.3 407.7L787.2 404.6L788.1 401.7L790 399.1L792.8 396.9L796.3 395.2L800.4 394.1L804.8 393.7L809.4 394L813.9 395L818 396.6L821.6 398.7L824.6 401.3L826.6 404.2L827.7 407.3Z" transform="translate(-2.1 1.8)" fill="#16282f" fill-opacity=".62" stroke="#16282f" stroke-opacity=".5" stroke-width="2.4"/><path d="M827.8 410.4L826.9 413.3L825 415.9L822.2 418.1L818.7 419.8L814.6 420.9L810.2 421.3L805.6 421L801.1 420L797 418.4L793.4 416.3L790.4 413.7L788.4 410.8L787.3 407.7L787.2 404.6L788.1 401.7L790 399.1L792.8 396.9L796.3 395.2L800.4 394.1L804.8 393.7L809.4 394L813.9 395L818 396.6L821.6 398.7L824.6 401.3L826.6 404.2L827.7 407.3Z" fill="#aed8e6" stroke="#12262d" stroke-width="1.6" stroke-opacity=".95" stroke-linejoin="round" />
<path d="M850.3 420.4L849.4 423.3L847.5 425.9L844.7 428.1L841.2 429.8L837.1 430.9L832.7 431.3L828.1 431L823.6 430L819.5 428.4L815.9 426.3L812.9 423.7L810.9 420.8L809.8 417.7L809.7 414.6L810.6 411.7L812.5 409.1L815.3 406.9L818.8 405.2L822.9 404.1L827.3 403.7L831.9 404L836.4 405L840.5 406.6L844.1 408.7L847.1 411.3L849.1 414.2L850.2 417.3Z" transform="translate(-2.1 1.8)" fill="#16282f" fill-opacity=".62" stroke="#16282f" stroke-opacity=".5" stroke-width="2.4"/><path d="M850.3 420.4L849.4 423.3L847.5 425.9L844.7 428.1L841.2 429.8L837.1 430.9L832.7 431.3L828.1 431L823.6 430L819.5 428.4L815.9 426.3L812.9 423.7L810.9 420.8L809.8 417.7L809.7 414.6L810.6 411.7L812.5 409.1L815.3 406.9L818.8 405.2L822.9 404.1L827.3 403.7L831.9 404L836.4 405L840.5 406.6L844.1 408.7L847.1 411.3L849.1 414.2L850.2 417.3Z" fill="#aed8e6" stroke="#12262d" stroke-width="1.6" stroke-opacity=".95" stroke-linejoin="round" />
<path d="M762.8 426.7L761.9 429.6L760 432.2L757.2 434.4L753.7 436.1L749.6 437.2L745.2 437.6L740.6 437.3L736.1 436.3L732 434.7L728.4 432.6L725.4 430L723.4 427.1L722.3 424L722.2 420.9L723.1 418L725 415.4L727.8 413.2L731.3 411.5L735.4 410.4L739.8 410L744.4 410.3L748.9 411.3L753 412.9L756.6 415L759.6 417.6L761.6 420.5L762.7 423.6Z" transform="translate(-2.1 1.8)" fill="#16282f" fill-opacity=".62" stroke="#16282f" stroke-opacity=".5" stroke-width="2.4"/><path d="M762.8 426.7L761.9 429.6L760 432.2L757.2 434.4L753.7 436.1L749.6 437.2L745.2 437.6L740.6 437.3L736.1 436.3L732 434.7L728.4 432.6L725.4 430L723.4 427.1L722.3 424L722.2 420.9L723.1 418L725 415.4L727.8 413.2L731.3 411.5L735.4 410.4L739.8 410L744.4 410.3L748.9 411.3L753 412.9L756.6 415L759.6 417.6L761.6 420.5L762.7 423.6Z" fill="#aed8e6" stroke="#12262d" stroke-width="1.6" stroke-opacity=".95" stroke-linejoin="round" />
<path d="M795.3 429.2L794.4 432.1L792.5 434.7L789.7 436.9L786.2 438.6L782.1 439.7L777.7 440.1L773.1 439.8L768.6 438.8L764.5 437.2L760.9 435.1L757.9 432.5L755.9 429.6L754.8 426.5L754.7 423.4L755.6 420.5L757.5 417.9L760.3 415.7L763.8 414L767.9 412.9L772.3 412.5L776.9 412.8L781.4 413.8L785.5 415.4L789.1 417.5L792.1 420.1L794.1 423L795.2 426.1Z" transform="translate(-2.1 1.8)" fill="#16282f" fill-opacity=".62" stroke="#16282f" stroke-opacity=".5" stroke-width="2.4"/><path d="M795.3 429.2L794.4 432.1L792.5 434.7L789.7 436.9L786.2 438.6L782.1 439.7L777.7 440.1L773.1 439.8L768.6 438.8L764.5 437.2L760.9 435.1L757.9 432.5L755.9 429.6L754.8 426.5L754.7 423.4L755.6 420.5L757.5 417.9L760.3 415.7L763.8 414L767.9 412.9L772.3 412.5L776.9 412.8L781.4 413.8L785.5 415.4L789.1 417.5L792.1 420.1L794.1 423L795.2 426.1Z" fill="#aed8e6" stroke="#12262d" stroke-width="1.6" stroke-opacity=".95" stroke-linejoin="round" />
<path d="M822.8 436.7L821.9 439.6L820 442.2L817.2 444.4L813.7 446.1L809.6 447.2L805.2 447.6L800.6 447.3L796.1 446.3L792 444.7L788.4 442.6L785.4 440L783.4 437.1L782.3 434L782.2 430.9L783.1 428L785 425.4L787.8 423.2L791.3 421.5L795.4 420.4L799.8 420L804.4 420.3L808.9 421.3L813 422.9L816.6 425L819.6 427.6L821.6 430.5L822.7 433.6Z" transform="translate(-2.1 1.8)" fill="#16282f" fill-opacity=".62" stroke="#16282f" stroke-opacity=".5" stroke-width="2.4"/><path d="M822.8 436.7L821.9 439.6L820 442.2L817.2 444.4L813.7 446.1L809.6 447.2L805.2 447.6L800.6 447.3L796.1 446.3L792 444.7L788.4 442.6L785.4 440L783.4 437.1L782.3 434L782.2 430.9L783.1 428L785 425.4L787.8 423.2L791.3 421.5L795.4 420.4L799.8 420L804.4 420.3L808.9 421.3L813 422.9L816.6 425L819.6 427.6L821.6 430.5L822.7 433.6Z" fill="#aed8e6" stroke="#12262d" stroke-width="1.6" stroke-opacity=".95" stroke-linejoin="round" />
<path d="M880.3 440.4L879.4 443.3L877.5 445.9L874.7 448.1L871.2 449.8L867.1 450.9L862.7 451.3L858.1 451L853.6 450L849.5 448.4L845.9 446.3L842.9 443.7L840.9 440.8L839.8 437.7L839.7 434.6L840.6 431.7L842.5 429.1L845.3 426.9L848.8 425.2L852.9 424.1L857.3 423.7L861.9 424L866.4 425L870.5 426.6L874.1 428.7L877.1 431.3L879.1 434.2L880.2 437.3Z" transform="translate(-2.1 1.8)" fill="#16282f" fill-opacity=".62" stroke="#16282f" stroke-opacity=".5" stroke-width="2.4"/><path d="M880.3 440.4L879.4 443.3L877.5 445.9L874.7 448.1L871.2 449.8L867.1 450.9L862.7 451.3L858.1 451L853.6 450L849.5 448.4L845.9 446.3L842.9 443.7L840.9 440.8L839.8 437.7L839.7 434.6L840.6 431.7L842.5 429.1L845.3 426.9L848.8 425.2L852.9 424.1L857.3 423.7L861.9 424L866.4 425L870.5 426.6L874.1 428.7L877.1 431.3L879.1 434.2L880.2 437.3Z" fill="#aed8e6" stroke="#12262d" stroke-width="1.6" stroke-opacity=".95" stroke-linejoin="round" />
<path d="M860.3 442.9L859.4 445.8L857.5 448.4L854.7 450.6L851.2 452.3L847.1 453.4L842.7 453.8L838.1 453.5L833.6 452.5L829.5 450.9L825.9 448.8L822.9 446.2L820.9 443.3L819.8 440.2L819.7 437.1L820.6 434.2L822.5 431.6L825.3 429.4L828.8 427.7L832.9 426.6L837.3 426.2L841.9 426.5L846.4 427.5L850.5 429.1L854.1 431.2L857.1 433.8L859.1 436.7L860.2 439.8Z" transform="translate(-2.1 1.8)" fill="#16282f" fill-opacity=".62" stroke="#16282f" stroke-opacity=".5" stroke-width="2.4"/><path d="M860.3 442.9L859.4 445.8L857.5 448.4L854.7 450.6L851.2 452.3L847.1 453.4L842.7 453.8L838.1 453.5L833.6 452.5L829.5 450.9L825.9 448.8L822.9 446.2L820.9 443.3L819.8 440.2L819.7 437.1L820.6 434.2L822.5 431.6L825.3 429.4L828.8 427.7L832.9 426.6L837.3 426.2L841.9 426.5L846.4 427.5L850.5 429.1L854.1 431.2L857.1 433.8L859.1 436.7L860.2 439.8Z" fill="#aed8e6" stroke="#12262d" stroke-width="1.6" stroke-opacity=".95" stroke-linejoin="round" />
<path d="M767.8 446.7L766.9 449.6L765 452.2L762.2 454.4L758.7 456.1L754.6 457.2L750.2 457.6L745.6 457.3L741.1 456.3L737 454.7L733.4 452.6L730.4 450L728.4 447.1L727.3 444L727.2 440.9L728.1 438L730 435.4L732.8 433.2L736.3 431.5L740.4 430.4L744.8 430L749.4 430.3L753.9 431.3L758 432.9L761.6 435L764.6 437.6L766.6 440.5L767.7 443.6Z" transform="translate(-2.1 1.8)" fill="#16282f" fill-opacity=".62" stroke="#16282f" stroke-opacity=".5" stroke-width="2.4"/><path d="M767.8 446.7L766.9 449.6L765 452.2L762.2 454.4L758.7 456.1L754.6 457.2L750.2 457.6L745.6 457.3L741.1 456.3L737 454.7L733.4 452.6L730.4 450L728.4 447.1L727.3 444L727.2 440.9L728.1 438L730 435.4L732.8 433.2L736.3 431.5L740.4 430.4L744.8 430L749.4 430.3L753.9 431.3L758 432.9L761.6 435L764.6 437.6L766.6 440.5L767.7 443.6Z" fill="#aed8e6" stroke="#12262d" stroke-width="1.6" stroke-opacity=".95" stroke-linejoin="round" />
<path d="M840.3 449.9L839.4 452.8L837.5 455.4L834.7 457.6L831.2 459.3L827.1 460.4L822.7 460.8L818.1 460.5L813.6 459.5L809.5 457.9L805.9 455.8L802.9 453.2L800.9 450.3L799.8 447.2L799.7 444.1L800.6 441.2L802.5 438.6L805.3 436.4L808.8 434.7L812.9 433.6L817.3 433.2L821.9 433.5L826.4 434.5L830.5 436.1L834.1 438.2L837.1 440.8L839.1 443.7L840.2 446.8Z" transform="translate(-2.1 1.8)" fill="#16282f" fill-opacity=".62" stroke="#16282f" stroke-opacity=".5" stroke-width="2.4"/><path d="M840.3 449.9L839.4 452.8L837.5 455.4L834.7 457.6L831.2 459.3L827.1 460.4L822.7 460.8L818.1 460.5L813.6 459.5L809.5 457.9L805.9 455.8L802.9 453.2L800.9 450.3L799.8 447.2L799.7 444.1L800.6 441.2L802.5 438.6L805.3 436.4L808.8 434.7L812.9 433.6L817.3 433.2L821.9 433.5L826.4 434.5L830.5 436.1L834.1 438.2L837.1 440.8L839.1 443.7L840.2 446.8Z" fill="#aed8e6" stroke="#12262d" stroke-width="1.6" stroke-opacity=".95" stroke-linejoin="round" />
<path d="M800.3 455.4L799.4 458.3L797.5 460.9L794.7 463.1L791.2 464.8L787.1 465.9L782.7 466.3L778.1 466L773.6 465L769.5 463.4L765.9 461.3L762.9 458.7L760.9 455.8L759.8 452.7L759.7 449.6L760.6 446.7L762.5 444.1L765.3 441.9L768.8 440.2L772.9 439.1L777.3 438.7L781.9 439L786.4 440L790.5 441.6L794.1 443.7L797.1 446.3L799.1 449.2L800.2 452.3Z" transform="translate(-2.1 1.8)" fill="#16282f" fill-opacity=".62" stroke="#16282f" stroke-opacity=".5" stroke-width="2.4"/><path d="M800.3 455.4L799.4 458.3L797.5 460.9L794.7 463.1L791.2 464.8L787.1 465.9L782.7 466.3L778.1 466L773.6 465L769.5 463.4L765.9 461.3L762.9 458.7L760.9 455.8L759.8 452.7L759.7 449.6L760.6 446.7L762.5 444.1L765.3 441.9L768.8 440.2L772.9 439.1L777.3 438.7L781.9 439L786.4 440L790.5 441.6L794.1 443.7L797.1 446.3L799.1 449.2L800.2 452.3Z" fill="#aed8e6" stroke="#12262d" stroke-width="1.6" stroke-opacity=".95" stroke-linejoin="round" />
<path d="M895.3 460.4L894.4 463.3L892.5 465.9L889.7 468.1L886.2 469.8L882.1 470.9L877.7 471.3L873.1 471L868.6 470L864.5 468.4L860.9 466.3L857.9 463.7L855.9 460.8L854.8 457.7L854.7 454.6L855.6 451.7L857.5 449.1L860.3 446.9L863.8 445.2L867.9 444.1L872.3 443.7L876.9 444L881.4 445L885.5 446.6L889.1 448.7L892.1 451.3L894.1 454.2L895.2 457.3Z" transform="translate(-2.1 1.8)" fill="#16282f" fill-opacity=".62" stroke="#16282f" stroke-opacity=".5" stroke-width="2.4"/><path d="M895.3 460.4L894.4 463.3L892.5 465.9L889.7 468.1L886.2 469.8L882.1 470.9L877.7 471.3L873.1 471L868.6 470L864.5 468.4L860.9 466.3L857.9 463.7L855.9 460.8L854.8 457.7L854.7 454.6L855.6 451.7L857.5 449.1L860.3 446.9L863.8 445.2L867.9 444.1L872.3 443.7L876.9 444L881.4 445L885.5 446.6L889.1 448.7L892.1 451.3L894.1 454.2L895.2 457.3Z" fill="#aed8e6" stroke="#12262d" stroke-width="1.6" stroke-opacity=".95" stroke-linejoin="round" />
<path d="M872.8 465.4L871.9 468.3L870 470.9L867.2 473.1L863.7 474.8L859.6 475.9L855.2 476.3L850.6 476L846.1 475L842 473.4L838.4 471.3L835.4 468.7L833.4 465.8L832.3 462.7L832.2 459.6L833.1 456.7L835 454.1L837.8 451.9L841.3 450.2L845.4 449.1L849.8 448.7L854.4 449L858.9 450L863 451.6L866.6 453.7L869.6 456.3L871.6 459.2L872.7 462.3Z" transform="translate(-2.1 1.8)" fill="#16282f" fill-opacity=".62" stroke="#16282f" stroke-opacity=".5" stroke-width="2.4"/><path d="M872.8 465.4L871.9 468.3L870 470.9L867.2 473.1L863.7 474.8L859.6 475.9L855.2 476.3L850.6 476L846.1 475L842 473.4L838.4 471.3L835.4 468.7L833.4 465.8L832.3 462.7L832.2 459.6L833.1 456.7L835 454.1L837.8 451.9L841.3 450.2L845.4 449.1L849.8 448.7L854.4 449L858.9 450L863 451.6L866.6 453.7L869.6 456.3L871.6 459.2L872.7 462.3Z" fill="#aed8e6" stroke="#12262d" stroke-width="1.6" stroke-opacity=".95" stroke-linejoin="round" />
<path d="M827.8 466.9L826.9 469.8L825 472.4L822.2 474.6L818.7 476.3L814.6 477.4L810.2 477.8L805.6 477.5L801.1 476.5L797 474.9L793.4 472.8L790.4 470.2L788.4 467.3L787.3 464.2L787.2 461.1L788.1 458.2L790 455.6L792.8 453.4L796.3 451.7L800.4 450.6L804.8 450.2L809.4 450.5L813.9 451.5L818 453.1L821.6 455.2L824.6 457.8L826.6 460.7L827.7 463.8Z" transform="translate(-2.1 1.8)" fill="#16282f" fill-opacity=".62" stroke="#16282f" stroke-opacity=".5" stroke-width="2.4"/><path d="M827.8 466.9L826.9 469.8L825 472.4L822.2 474.6L818.7 476.3L814.6 477.4L810.2 477.8L805.6 477.5L801.1 476.5L797 474.9L793.4 472.8L790.4 470.2L788.4 467.3L787.3 464.2L787.2 461.1L788.1 458.2L790 455.6L792.8 453.4L796.3 451.7L800.4 450.6L804.8 450.2L809.4 450.5L813.9 451.5L818 453.1L821.6 455.2L824.6 457.8L826.6 460.7L827.7 463.8Z" fill="#aed8e6" stroke="#12262d" stroke-width="1.6" stroke-opacity=".95" stroke-linejoin="round" />
<path d="M785.3 470.4L784.4 473.3L782.5 475.9L779.7 478.1L776.2 479.8L772.1 480.9L767.7 481.3L763.1 481L758.6 480L754.5 478.4L750.9 476.3L747.9 473.7L745.9 470.8L744.8 467.7L744.7 464.6L745.6 461.7L747.5 459.1L750.3 456.9L753.8 455.2L757.9 454.1L762.3 453.7L766.9 454L771.4 455L775.5 456.6L779.1 458.7L782.1 461.3L784.1 464.2L785.2 467.3Z" transform="translate(-2.1 1.8)" fill="#16282f" fill-opacity=".62" stroke="#16282f" stroke-opacity=".5" stroke-width="2.4"/><path d="M785.3 470.4L784.4 473.3L782.5 475.9L779.7 478.1L776.2 479.8L772.1 480.9L767.7 481.3L763.1 481L758.6 480L754.5 478.4L750.9 476.3L747.9 473.7L745.9 470.8L744.8 467.7L744.7 464.6L745.6 461.7L747.5 459.1L750.3 456.9L753.8 455.2L757.9 454.1L762.3 453.7L766.9 454L771.4 455L775.5 456.6L779.1 458.7L782.1 461.3L784.1 464.2L785.2 467.3Z" fill="#aed8e6" stroke="#12262d" stroke-width="1.6" stroke-opacity=".95" stroke-linejoin="round" />
<path d="M897.8 482.9L896.9 485.8L895 488.4L892.2 490.6L888.7 492.3L884.6 493.4L880.2 493.8L875.6 493.5L871.1 492.5L867 490.9L863.4 488.8L860.4 486.2L858.4 483.3L857.3 480.2L857.2 477.1L858.1 474.2L860 471.6L862.8 469.4L866.3 467.7L870.4 466.6L874.8 466.2L879.4 466.5L883.9 467.5L888 469.1L891.6 471.2L894.6 473.8L896.6 476.7L897.7 479.8Z" transform="translate(-2.1 1.8)" fill="#16282f" fill-opacity=".62" stroke="#16282f" stroke-opacity=".5" stroke-width="2.4"/><path d="M897.8 482.9L896.9 485.8L895 488.4L892.2 490.6L888.7 492.3L884.6 493.4L880.2 493.8L875.6 493.5L871.1 492.5L867 490.9L863.4 488.8L860.4 486.2L858.4 483.3L857.3 480.2L857.2 477.1L858.1 474.2L860 471.6L862.8 469.4L866.3 467.7L870.4 466.6L874.8 466.2L879.4 466.5L883.9 467.5L888 469.1L891.6 471.2L894.6 473.8L896.6 476.7L897.7 479.8Z" fill="#aed8e6" stroke="#12262d" stroke-width="1.6" stroke-opacity=".95" stroke-linejoin="round" />
<path d="M852.8 483.9L851.9 486.8L850 489.4L847.2 491.6L843.7 493.3L839.6 494.4L835.2 494.8L830.6 494.5L826.1 493.5L822 491.9L818.4 489.8L815.4 487.2L813.4 484.3L812.3 481.2L812.2 478.1L813.1 475.2L815 472.6L817.8 470.4L821.3 468.7L825.4 467.6L829.8 467.2L834.4 467.5L838.9 468.5L843 470.1L846.6 472.2L849.6 474.8L851.6 477.7L852.7 480.8Z" transform="translate(-2.1 1.8)" fill="#16282f" fill-opacity=".62" stroke="#16282f" stroke-opacity=".5" stroke-width="2.4"/><path d="M852.8 483.9L851.9 486.8L850 489.4L847.2 491.6L843.7 493.3L839.6 494.4L835.2 494.8L830.6 494.5L826.1 493.5L822 491.9L818.4 489.8L815.4 487.2L813.4 484.3L812.3 481.2L812.2 478.1L813.1 475.2L815 472.6L817.8 470.4L821.3 468.7L825.4 467.6L829.8 467.2L834.4 467.5L838.9 468.5L843 470.1L846.6 472.2L849.6 474.8L851.6 477.7L852.7 480.8Z" fill="#aed8e6" stroke="#12262d" stroke-width="1.6" stroke-opacity=".95" stroke-linejoin="round" />
<path d="M810.3 487.9L809.4 490.8L807.5 493.4L804.7 495.6L801.2 497.3L797.1 498.4L792.7 498.8L788.1 498.5L783.6 497.5L779.5 495.9L775.9 493.8L772.9 491.2L770.9 488.3L769.8 485.2L769.7 482.1L770.6 479.2L772.5 476.6L775.3 474.4L778.8 472.7L782.9 471.6L787.3 471.2L791.9 471.5L796.4 472.5L800.5 474.1L804.1 476.2L807.1 478.8L809.1 481.7L810.2 484.8Z" transform="translate(-2.1 1.8)" fill="#16282f" fill-opacity=".62" stroke="#16282f" stroke-opacity=".5" stroke-width="2.4"/><path d="M810.3 487.9L809.4 490.8L807.5 493.4L804.7 495.6L801.2 497.3L797.1 498.4L792.7 498.8L788.1 498.5L783.6 497.5L779.5 495.9L775.9 493.8L772.9 491.2L770.9 488.3L769.8 485.2L769.7 482.1L770.6 479.2L772.5 476.6L775.3 474.4L778.8 472.7L782.9 471.6L787.3 471.2L791.9 471.5L796.4 472.5L800.5 474.1L804.1 476.2L807.1 478.8L809.1 481.7L810.2 484.8Z" fill="#aed8e6" stroke="#12262d" stroke-width="1.6" stroke-opacity=".95" stroke-linejoin="round" />
<path d="M875.3 500.4L874.4 503.3L872.5 505.9L869.7 508.1L866.2 509.8L862.1 510.9L857.7 511.3L853.1 511L848.6 510L844.5 508.4L840.9 506.3L837.9 503.7L835.9 500.8L834.8 497.7L834.7 494.6L835.6 491.7L837.5 489.1L840.3 486.9L843.8 485.2L847.9 484.1L852.3 483.7L856.9 484L861.4 485L865.5 486.6L869.1 488.7L872.1 491.3L874.1 494.2L875.2 497.3Z" transform="translate(-2.1 1.8)" fill="#16282f" fill-opacity=".62" stroke="#16282f" stroke-opacity=".5" stroke-width="2.4"/><path d="M875.3 500.4L874.4 503.3L872.5 505.9L869.7 508.1L866.2 509.8L862.1 510.9L857.7 511.3L853.1 511L848.6 510L844.5 508.4L840.9 506.3L837.9 503.7L835.9 500.8L834.8 497.7L834.7 494.6L835.6 491.7L837.5 489.1L840.3 486.9L843.8 485.2L847.9 484.1L852.3 483.7L856.9 484L861.4 485L865.5 486.6L869.1 488.7L872.1 491.3L874.1 494.2L875.2 497.3Z" fill="#aed8e6" stroke="#12262d" stroke-width="1.6" stroke-opacity=".95" stroke-linejoin="round" />
<path d="M830.3 502.9L829.4 505.8L827.5 508.4L824.7 510.6L821.2 512.3L817.1 513.4L812.7 513.8L808.1 513.5L803.6 512.5L799.5 510.9L795.9 508.8L792.9 506.2L790.9 503.3L789.8 500.2L789.7 497.1L790.6 494.2L792.5 491.6L795.3 489.4L798.8 487.7L802.9 486.6L807.3 486.2L811.9 486.5L816.4 487.5L820.5 489.1L824.1 491.2L827.1 493.8L829.1 496.7L830.2 499.8Z" transform="translate(-2.1 1.8)" fill="#16282f" fill-opacity=".62" stroke="#16282f" stroke-opacity=".5" stroke-width="2.4"/><path d="M830.3 502.9L829.4 505.8L827.5 508.4L824.7 510.6L821.2 512.3L817.1 513.4L812.7 513.8L808.1 513.5L803.6 512.5L799.5 510.9L795.9 508.8L792.9 506.2L790.9 503.3L789.8 500.2L789.7 497.1L790.6 494.2L792.5 491.6L795.3 489.4L798.8 487.7L802.9 486.6L807.3 486.2L811.9 486.5L816.4 487.5L820.5 489.1L824.1 491.2L827.1 493.8L829.1 496.7L830.2 499.8Z" fill="#aed8e6" stroke="#12262d" stroke-width="1.6" stroke-opacity=".95" stroke-linejoin="round" />
<path d="M686.8 501.1L685.8 504.2L683.7 507L680.8 509.4L677 511.2L672.6 512.4L667.9 512.8L663 512.5L658.2 511.4L653.7 509.7L649.8 507.4L646.7 504.6L644.5 501.5L643.3 498.2L643.2 494.9L644.2 491.8L646.3 489L649.2 486.6L653 484.8L657.4 483.6L662.1 483.2L667 483.5L671.8 484.6L676.3 486.3L680.2 488.6L683.3 491.4L685.5 494.5L686.7 497.8Z" transform="translate(-2.2 2)" fill="#16282f" fill-opacity=".62" stroke="#16282f" stroke-opacity=".5" stroke-width="2.4"/><path d="M686.8 501.1L685.8 504.2L683.7 507L680.8 509.4L677 511.2L672.6 512.4L667.9 512.8L663 512.5L658.2 511.4L653.7 509.7L649.8 507.4L646.7 504.6L644.5 501.5L643.3 498.2L643.2 494.9L644.2 491.8L646.3 489L649.2 486.6L653 484.8L657.4 483.6L662.1 483.2L667 483.5L671.8 484.6L676.3 486.3L680.2 488.6L683.3 491.4L685.5 494.5L686.7 497.8Z" fill="#aed8e6" stroke="#12262d" stroke-width="1.6" stroke-opacity=".95" stroke-linejoin="round" />
<path d="M659.3 503.1L658.3 506.2L656.2 509L653.3 511.4L649.5 513.2L645.1 514.4L640.4 514.8L635.5 514.5L630.7 513.4L626.2 511.7L622.3 509.4L619.2 506.6L617 503.5L615.8 500.2L615.7 496.9L616.7 493.8L618.8 491L621.7 488.6L625.5 486.8L629.9 485.6L634.6 485.2L639.5 485.5L644.3 486.6L648.8 488.3L652.7 490.6L655.8 493.4L658 496.5L659.2 499.8Z" transform="translate(-2.2 2)" fill="#16282f" fill-opacity=".62" stroke="#16282f" stroke-opacity=".5" stroke-width="2.4"/><path d="M659.3 503.1L658.3 506.2L656.2 509L653.3 511.4L649.5 513.2L645.1 514.4L640.4 514.8L635.5 514.5L630.7 513.4L626.2 511.7L622.3 509.4L619.2 506.6L617 503.5L615.8 500.2L615.7 496.9L616.7 493.8L618.8 491L621.7 488.6L625.5 486.8L629.9 485.6L634.6 485.2L639.5 485.5L644.3 486.6L648.8 488.3L652.7 490.6L655.8 493.4L658 496.5L659.2 499.8Z" fill="#aed8e6" stroke="#12262d" stroke-width="1.6" stroke-opacity=".95" stroke-linejoin="round" />
<path d="M724.3 510.6L723.3 513.7L721.2 516.5L718.3 518.9L714.5 520.7L710.1 521.9L705.4 522.3L700.5 522L695.7 520.9L691.2 519.2L687.3 516.9L684.2 514.1L682 511L680.8 507.7L680.7 504.4L681.7 501.3L683.8 498.5L686.7 496.1L690.5 494.3L694.9 493.1L699.6 492.7L704.5 493L709.3 494.1L713.8 495.8L717.7 498.1L720.8 500.9L723 504L724.2 507.3Z" transform="translate(-2.2 2)" fill="#16282f" fill-opacity=".62" stroke="#16282f" stroke-opacity=".5" stroke-width="2.4"/><path d="M724.3 510.6L723.3 513.7L721.2 516.5L718.3 518.9L714.5 520.7L710.1 521.9L705.4 522.3L700.5 522L695.7 520.9L691.2 519.2L687.3 516.9L684.2 514.1L682 511L680.8 507.7L680.7 504.4L681.7 501.3L683.8 498.5L686.7 496.1L690.5 494.3L694.9 493.1L699.6 492.7L704.5 493L709.3 494.1L713.8 495.8L717.7 498.1L720.8 500.9L723 504L724.2 507.3Z" fill="#aed8e6" stroke="#12262d" stroke-width="1.6" stroke-opacity=".95" stroke-linejoin="round" />
<path d="M634.3 520.6L633.3 523.7L631.2 526.5L628.3 528.9L624.5 530.7L620.1 531.9L615.4 532.3L610.5 532L605.7 530.9L601.2 529.2L597.3 526.9L594.2 524.1L592 521L590.8 517.7L590.7 514.4L591.7 511.3L593.8 508.5L596.7 506.1L600.5 504.3L604.9 503.1L609.6 502.7L614.5 503L619.3 504.1L623.8 505.8L627.7 508.1L630.8 510.9L633 514L634.2 517.3Z" transform="translate(-2.2 2)" fill="#16282f" fill-opacity=".62" stroke="#16282f" stroke-opacity=".5" stroke-width="2.4"/><path d="M634.3 520.6L633.3 523.7L631.2 526.5L628.3 528.9L624.5 530.7L620.1 531.9L615.4 532.3L610.5 532L605.7 530.9L601.2 529.2L597.3 526.9L594.2 524.1L592 521L590.8 517.7L590.7 514.4L591.7 511.3L593.8 508.5L596.7 506.1L600.5 504.3L604.9 503.1L609.6 502.7L614.5 503L619.3 504.1L623.8 505.8L627.7 508.1L630.8 510.9L633 514L634.2 517.3Z" fill="#aed8e6" stroke="#12262d" stroke-width="1.6" stroke-opacity=".95" stroke-linejoin="round" />
<path d="M699.3 520.6L698.3 523.7L696.2 526.5L693.3 528.9L689.5 530.7L685.1 531.9L680.4 532.3L675.5 532L670.7 530.9L666.2 529.2L662.3 526.9L659.2 524.1L657 521L655.8 517.7L655.7 514.4L656.7 511.3L658.8 508.5L661.7 506.1L665.5 504.3L669.9 503.1L674.6 502.7L679.5 503L684.3 504.1L688.8 505.8L692.7 508.1L695.8 510.9L698 514L699.2 517.3Z" transform="translate(-2.2 2)" fill="#16282f" fill-opacity=".62" stroke="#16282f" stroke-opacity=".5" stroke-width="2.4"/><path d="M699.3 520.6L698.3 523.7L696.2 526.5L693.3 528.9L689.5 530.7L685.1 531.9L680.4 532.3L675.5 532L670.7 530.9L666.2 529.2L662.3 526.9L659.2 524.1L657 521L655.8 517.7L655.7 514.4L656.7 511.3L658.8 508.5L661.7 506.1L665.5 504.3L669.9 503.1L674.6 502.7L679.5 503L684.3 504.1L688.8 505.8L692.7 508.1L695.8 510.9L698 514L699.2 517.3Z" fill="#aed8e6" stroke="#12262d" stroke-width="1.6" stroke-opacity=".95" stroke-linejoin="round" />
<path d="M661.8 531.1L660.8 534.2L658.7 537L655.8 539.4L652 541.2L647.6 542.4L642.9 542.8L638 542.5L633.2 541.4L628.7 539.7L624.8 537.4L621.7 534.6L619.5 531.5L618.3 528.2L618.2 524.9L619.2 521.8L621.3 519L624.2 516.6L628 514.8L632.4 513.6L637.1 513.2L642 513.5L646.8 514.6L651.3 516.3L655.2 518.6L658.3 521.4L660.5 524.5L661.7 527.8Z" transform="translate(-2.2 2)" fill="#16282f" fill-opacity=".62" stroke="#16282f" stroke-opacity=".5" stroke-width="2.4"/><path d="M661.8 531.1L660.8 534.2L658.7 537L655.8 539.4L652 541.2L647.6 542.4L642.9 542.8L638 542.5L633.2 541.4L628.7 539.7L624.8 537.4L621.7 534.6L619.5 531.5L618.3 528.2L618.2 524.9L619.2 521.8L621.3 519L624.2 516.6L628 514.8L632.4 513.6L637.1 513.2L642 513.5L646.8 514.6L651.3 516.3L655.2 518.6L658.3 521.4L660.5 524.5L661.7 527.8Z" fill="#aed8e6" stroke="#12262d" stroke-width="1.6" stroke-opacity=".95" stroke-linejoin="round" />
<path d="M726.8 535.6L725.8 538.7L723.7 541.5L720.8 543.9L717 545.7L712.6 546.9L707.9 547.3L703 547L698.2 545.9L693.7 544.2L689.8 541.9L686.7 539.1L684.5 536L683.3 532.7L683.2 529.4L684.2 526.3L686.3 523.5L689.2 521.1L693 519.3L697.4 518.1L702.1 517.7L707 518L711.8 519.1L716.3 520.8L720.2 523.1L723.3 525.9L725.5 529L726.7 532.3Z" transform="translate(-2.2 2)" fill="#16282f" fill-opacity=".62" stroke="#16282f" stroke-opacity=".5" stroke-width="2.4"/><path d="M726.8 535.6L725.8 538.7L723.7 541.5L720.8 543.9L717 545.7L712.6 546.9L707.9 547.3L703 547L698.2 545.9L693.7 544.2L689.8 541.9L686.7 539.1L684.5 536L683.3 532.7L683.2 529.4L684.2 526.3L686.3 523.5L689.2 521.1L693 519.3L697.4 518.1L702.1 517.7L707 518L711.8 519.1L716.3 520.8L720.2 523.1L723.3 525.9L725.5 529L726.7 532.3Z" fill="#aed8e6" stroke="#12262d" stroke-width="1.6" stroke-opacity=".95" stroke-linejoin="round" />
<path d="M624.3 543.1L623.3 546.2L621.2 549L618.3 551.4L614.5 553.2L610.1 554.4L605.4 554.8L600.5 554.5L595.7 553.4L591.2 551.7L587.3 549.4L584.2 546.6L582 543.5L580.8 540.2L580.7 536.9L581.7 533.8L583.8 531L586.7 528.6L590.5 526.8L594.9 525.6L599.6 525.2L604.5 525.5L609.3 526.6L613.8 528.3L617.7 530.6L620.8 533.4L623 536.5L624.2 539.8Z" transform="translate(-2.2 2)" fill="#16282f" fill-opacity=".62" stroke="#16282f" stroke-opacity=".5" stroke-width="2.4"/><path d="M624.3 543.1L623.3 546.2L621.2 549L618.3 551.4L614.5 553.2L610.1 554.4L605.4 554.8L600.5 554.5L595.7 553.4L591.2 551.7L587.3 549.4L584.2 546.6L582 543.5L580.8 540.2L580.7 536.9L581.7 533.8L583.8 531L586.7 528.6L590.5 526.8L594.9 525.6L599.6 525.2L604.5 525.5L609.3 526.6L613.8 528.3L617.7 530.6L620.8 533.4L623 536.5L624.2 539.8Z" fill="#aed8e6" stroke="#12262d" stroke-width="1.6" stroke-opacity=".95" stroke-linejoin="round" />
<path d="M749.3 548.1L748.3 551.2L746.2 554L743.3 556.4L739.5 558.2L735.1 559.4L730.4 559.8L725.5 559.5L720.7 558.4L716.2 556.7L712.3 554.4L709.2 551.6L707 548.5L705.8 545.2L705.7 541.9L706.7 538.8L708.8 536L711.7 533.6L715.5 531.8L719.9 530.6L724.6 530.2L729.5 530.5L734.3 531.6L738.8 533.3L742.7 535.6L745.8 538.4L748 541.5L749.2 544.8Z" transform="translate(-2.2 2)" fill="#16282f" fill-opacity=".62" stroke="#16282f" stroke-opacity=".5" stroke-width="2.4"/><path d="M749.3 548.1L748.3 551.2L746.2 554L743.3 556.4L739.5 558.2L735.1 559.4L730.4 559.8L725.5 559.5L720.7 558.4L716.2 556.7L712.3 554.4L709.2 551.6L707 548.5L705.8 545.2L705.7 541.9L706.7 538.8L708.8 536L711.7 533.6L715.5 531.8L719.9 530.6L724.6 530.2L729.5 530.5L734.3 531.6L738.8 533.3L742.7 535.6L745.8 538.4L748 541.5L749.2 544.8Z" fill="#aed8e6" stroke="#12262d" stroke-width="1.6" stroke-opacity=".95" stroke-linejoin="round" />
<path d="M694.3 549.1L693.3 552.2L691.2 555L688.3 557.4L684.5 559.2L680.1 560.4L675.4 560.8L670.5 560.5L665.7 559.4L661.2 557.7L657.3 555.4L654.2 552.6L652 549.5L650.8 546.2L650.7 542.9L651.7 539.8L653.8 537L656.7 534.6L660.5 532.8L664.9 531.6L669.6 531.2L674.5 531.5L679.3 532.6L683.8 534.3L687.7 536.6L690.8 539.4L693 542.5L694.2 545.8Z" transform="translate(-2.2 2)" fill="#16282f" fill-opacity=".62" stroke="#16282f" stroke-opacity=".5" stroke-width="2.4"/><path d="M694.3 549.1L693.3 552.2L691.2 555L688.3 557.4L684.5 559.2L680.1 560.4L675.4 560.8L670.5 560.5L665.7 559.4L661.2 557.7L657.3 555.4L654.2 552.6L652 549.5L650.8 546.2L650.7 542.9L651.7 539.8L653.8 537L656.7 534.6L660.5 532.8L664.9 531.6L669.6 531.2L674.5 531.5L679.3 532.6L683.8 534.3L687.7 536.6L690.8 539.4L693 542.5L694.2 545.8Z" fill="#aed8e6" stroke="#12262d" stroke-width="1.6" stroke-opacity=".95" stroke-linejoin="round" />
<path d="M664.3 559.1L663.3 562.2L661.2 565L658.3 567.4L654.5 569.2L650.1 570.4L645.4 570.8L640.5 570.5L635.7 569.4L631.2 567.7L627.3 565.4L624.2 562.6L622 559.5L620.8 556.2L620.7 552.9L621.7 549.8L623.8 547L626.7 544.6L630.5 542.8L634.9 541.6L639.6 541.2L644.5 541.5L649.3 542.6L653.8 544.3L657.7 546.6L660.8 549.4L663 552.5L664.2 555.8Z" transform="translate(-2.2 2)" fill="#16282f" fill-opacity=".62" stroke="#16282f" stroke-opacity=".5" stroke-width="2.4"/><path d="M664.3 559.1L663.3 562.2L661.2 565L658.3 567.4L654.5 569.2L650.1 570.4L645.4 570.8L640.5 570.5L635.7 569.4L631.2 567.7L627.3 565.4L624.2 562.6L622 559.5L620.8 556.2L620.7 552.9L621.7 549.8L623.8 547L626.7 544.6L630.5 542.8L634.9 541.6L639.6 541.2L644.5 541.5L649.3 542.6L653.8 544.3L657.7 546.6L660.8 549.4L663 552.5L664.2 555.8Z" fill="#aed8e6" stroke="#12262d" stroke-width="1.6" stroke-opacity=".95" stroke-linejoin="round" />
<path d="M726.8 563.1L725.8 566.2L723.7 569L720.8 571.4L717 573.2L712.6 574.4L707.9 574.8L703 574.5L698.2 573.4L693.7 571.7L689.8 569.4L686.7 566.6L684.5 563.5L683.3 560.2L683.2 556.9L684.2 553.8L686.3 551L689.2 548.6L693 546.8L697.4 545.6L702.1 545.2L707 545.5L711.8 546.6L716.3 548.3L720.2 550.6L723.3 553.4L725.5 556.5L726.7 559.8Z" transform="translate(-2.2 2)" fill="#16282f" fill-opacity=".62" stroke="#16282f" stroke-opacity=".5" stroke-width="2.4"/><path d="M726.8 563.1L725.8 566.2L723.7 569L720.8 571.4L717 573.2L712.6 574.4L707.9 574.8L703 574.5L698.2 573.4L693.7 571.7L689.8 569.4L686.7 566.6L684.5 563.5L683.3 560.2L683.2 556.9L684.2 553.8L686.3 551L689.2 548.6L693 546.8L697.4 545.6L702.1 545.2L707 545.5L711.8 546.6L716.3 548.3L720.2 550.6L723.3 553.4L725.5 556.5L726.7 559.8Z" fill="#aed8e6" stroke="#12262d" stroke-width="1.6" stroke-opacity=".95" stroke-linejoin="round" />
<path d="M631.8 565.6L630.8 568.7L628.7 571.5L625.8 573.9L622 575.7L617.6 576.9L612.9 577.3L608 577L603.2 575.9L598.7 574.2L594.8 571.9L591.7 569.1L589.5 566L588.3 562.7L588.2 559.4L589.2 556.3L591.3 553.5L594.2 551.1L598 549.3L602.4 548.1L607.1 547.7L612 548L616.8 549.1L621.3 550.8L625.2 553.1L628.3 555.9L630.5 559L631.7 562.3Z" transform="translate(-2.2 2)" fill="#16282f" fill-opacity=".62" stroke="#16282f" stroke-opacity=".5" stroke-width="2.4"/><path d="M631.8 565.6L630.8 568.7L628.7 571.5L625.8 573.9L622 575.7L617.6 576.9L612.9 577.3L608 577L603.2 575.9L598.7 574.2L594.8 571.9L591.7 569.1L589.5 566L588.3 562.7L588.2 559.4L589.2 556.3L591.3 553.5L594.2 551.1L598 549.3L602.4 548.1L607.1 547.7L612 548L616.8 549.1L621.3 550.8L625.2 553.1L628.3 555.9L630.5 559L631.7 562.3Z" fill="#aed8e6" stroke="#12262d" stroke-width="1.6" stroke-opacity=".95" stroke-linejoin="round" />
<path d="M756.8 575.1L755.8 578.2L753.7 581L750.8 583.4L747 585.2L742.6 586.4L737.9 586.8L733 586.5L728.2 585.4L723.7 583.7L719.8 581.4L716.7 578.6L714.5 575.5L713.3 572.2L713.2 568.9L714.2 565.8L716.3 563L719.2 560.6L723 558.8L727.4 557.6L732.1 557.2L737 557.5L741.8 558.6L746.3 560.3L750.2 562.6L753.3 565.4L755.5 568.5L756.7 571.8Z" transform="translate(-2.2 2)" fill="#16282f" fill-opacity=".62" stroke="#16282f" stroke-opacity=".5" stroke-width="2.4"/><path d="M756.8 575.1L755.8 578.2L753.7 581L750.8 583.4L747 585.2L742.6 586.4L737.9 586.8L733 586.5L728.2 585.4L723.7 583.7L719.8 581.4L716.7 578.6L714.5 575.5L713.3 572.2L713.2 568.9L714.2 565.8L716.3 563L719.2 560.6L723 558.8L727.4 557.6L732.1 557.2L737 557.5L741.8 558.6L746.3 560.3L750.2 562.6L753.3 565.4L755.5 568.5L756.7 571.8Z" fill="#aed8e6" stroke="#12262d" stroke-width="1.6" stroke-opacity=".95" stroke-linejoin="round" />
<path d="M694.3 578.1L693.3 581.2L691.2 584L688.3 586.4L684.5 588.2L680.1 589.4L675.4 589.8L670.5 589.5L665.7 588.4L661.2 586.7L657.3 584.4L654.2 581.6L652 578.5L650.8 575.2L650.7 571.9L651.7 568.8L653.8 566L656.7 563.6L660.5 561.8L664.9 560.6L669.6 560.2L674.5 560.5L679.3 561.6L683.8 563.3L687.7 565.6L690.8 568.4L693 571.5L694.2 574.8Z" transform="translate(-2.2 2)" fill="#16282f" fill-opacity=".62" stroke="#16282f" stroke-opacity=".5" stroke-width="2.4"/><path d="M694.3 578.1L693.3 581.2L691.2 584L688.3 586.4L684.5 588.2L680.1 589.4L675.4 589.8L670.5 589.5L665.7 588.4L661.2 586.7L657.3 584.4L654.2 581.6L652 578.5L650.8 575.2L650.7 571.9L651.7 568.8L653.8 566L656.7 563.6L660.5 561.8L664.9 560.6L669.6 560.2L674.5 560.5L679.3 561.6L683.8 563.3L687.7 565.6L690.8 568.4L693 571.5L694.2 574.8Z" fill="#aed8e6" stroke="#12262d" stroke-width="1.6" stroke-opacity=".95" stroke-linejoin="round" />
<path d="M654.3 585.6L653.3 588.7L651.2 591.5L648.3 593.9L644.5 595.7L640.1 596.9L635.4 597.3L630.5 597L625.7 595.9L621.2 594.2L617.3 591.9L614.2 589.1L612 586L610.8 582.7L610.7 579.4L611.7 576.3L613.8 573.5L616.7 571.1L620.5 569.3L624.9 568.1L629.6 567.7L634.5 568L639.3 569.1L643.8 570.8L647.7 573.1L650.8 575.9L653 579L654.2 582.3Z" transform="translate(-2.2 2)" fill="#16282f" fill-opacity=".62" stroke="#16282f" stroke-opacity=".5" stroke-width="2.4"/><path d="M654.3 585.6L653.3 588.7L651.2 591.5L648.3 593.9L644.5 595.7L640.1 596.9L635.4 597.3L630.5 597L625.7 595.9L621.2 594.2L617.3 591.9L614.2 589.1L612 586L610.8 582.7L610.7 579.4L611.7 576.3L613.8 573.5L616.7 571.1L620.5 569.3L624.9 568.1L629.6 567.7L634.5 568L639.3 569.1L643.8 570.8L647.7 573.1L650.8 575.9L653 579L654.2 582.3Z" fill="#aed8e6" stroke="#12262d" stroke-width="1.6" stroke-opacity=".95" stroke-linejoin="round" />
<path d="M721.8 591.1L720.8 594.2L718.7 597L715.8 599.4L712 601.2L707.6 602.4L702.9 602.8L698 602.5L693.2 601.4L688.7 599.7L684.8 597.4L681.7 594.6L679.5 591.5L678.3 588.2L678.2 584.9L679.2 581.8L681.3 579L684.2 576.6L688 574.8L692.4 573.6L697.1 573.2L702 573.5L706.8 574.6L711.3 576.3L715.2 578.6L718.3 581.4L720.5 584.5L721.7 587.8Z" transform="translate(-2.2 2)" fill="#16282f" fill-opacity=".62" stroke="#16282f" stroke-opacity=".5" stroke-width="2.4"/><path d="M721.8 591.1L720.8 594.2L718.7 597L715.8 599.4L712 601.2L707.6 602.4L702.9 602.8L698 602.5L693.2 601.4L688.7 599.7L684.8 597.4L681.7 594.6L679.5 591.5L678.3 588.2L678.2 584.9L679.2 581.8L681.3 579L684.2 576.6L688 574.8L692.4 573.6L697.1 573.2L702 573.5L706.8 574.6L711.3 576.3L715.2 578.6L718.3 581.4L720.5 584.5L721.7 587.8Z" fill="#aed8e6" stroke="#12262d" stroke-width="1.6" stroke-opacity=".95" stroke-linejoin="round" />
<path d="M771.8 595.1L770.8 598.2L768.7 601L765.8 603.4L762 605.2L757.6 606.4L752.9 606.8L748 606.5L743.2 605.4L738.7 603.7L734.8 601.4L731.7 598.6L729.5 595.5L728.3 592.2L728.2 588.9L729.2 585.8L731.3 583L734.2 580.6L738 578.8L742.4 577.6L747.1 577.2L752 577.5L756.8 578.6L761.3 580.3L765.2 582.6L768.3 585.4L770.5 588.5L771.7 591.8Z" transform="translate(-2.2 2)" fill="#16282f" fill-opacity=".62" stroke="#16282f" stroke-opacity=".5" stroke-width="2.4"/><path d="M771.8 595.1L770.8 598.2L768.7 601L765.8 603.4L762 605.2L757.6 606.4L752.9 606.8L748 606.5L743.2 605.4L738.7 603.7L734.8 601.4L731.7 598.6L729.5 595.5L728.3 592.2L728.2 588.9L729.2 585.8L731.3 583L734.2 580.6L738 578.8L742.4 577.6L747.1 577.2L752 577.5L756.8 578.6L761.3 580.3L765.2 582.6L768.3 585.4L770.5 588.5L771.7 591.8Z" fill="#aed8e6" stroke="#12262d" stroke-width="1.6" stroke-opacity=".95" stroke-linejoin="round" />
<path d="M681.8 605.1L680.8 608.2L678.7 611L675.8 613.4L672 615.2L667.6 616.4L662.9 616.8L658 616.5L653.2 615.4L648.7 613.7L644.8 611.4L641.7 608.6L639.5 605.5L638.3 602.2L638.2 598.9L639.2 595.8L641.3 593L644.2 590.6L648 588.8L652.4 587.6L657.1 587.2L662 587.5L666.8 588.6L671.3 590.3L675.2 592.6L678.3 595.4L680.5 598.5L681.7 601.8Z" transform="translate(-2.2 2)" fill="#16282f" fill-opacity=".62" stroke="#16282f" stroke-opacity=".5" stroke-width="2.4"/><path d="M681.8 605.1L680.8 608.2L678.7 611L675.8 613.4L672 615.2L667.6 616.4L662.9 616.8L658 616.5L653.2 615.4L648.7 613.7L644.8 611.4L641.7 608.6L639.5 605.5L638.3 602.2L638.2 598.9L639.2 595.8L641.3 593L644.2 590.6L648 588.8L652.4 587.6L657.1 587.2L662 587.5L666.8 588.6L671.3 590.3L675.2 592.6L678.3 595.4L680.5 598.5L681.7 601.8Z" fill="#aed8e6" stroke="#12262d" stroke-width="1.6" stroke-opacity=".95" stroke-linejoin="round" />
<path d="M746.8 609.1L745.8 612.2L743.7 615L740.8 617.4L737 619.2L732.6 620.4L727.9 620.8L723 620.5L718.2 619.4L713.7 617.7L709.8 615.4L706.7 612.6L704.5 609.5L703.3 606.2L703.2 602.9L704.2 599.8L706.3 597L709.2 594.6L713 592.8L717.4 591.6L722.1 591.2L727 591.5L731.8 592.6L736.3 594.3L740.2 596.6L743.3 599.4L745.5 602.5L746.7 605.8Z" transform="translate(-2.2 2)" fill="#16282f" fill-opacity=".62" stroke="#16282f" stroke-opacity=".5" stroke-width="2.4"/><path d="M746.8 609.1L745.8 612.2L743.7 615L740.8 617.4L737 619.2L732.6 620.4L727.9 620.8L723 620.5L718.2 619.4L713.7 617.7L709.8 615.4L706.7 612.6L704.5 609.5L703.3 606.2L703.2 602.9L704.2 599.8L706.3 597L709.2 594.6L713 592.8L717.4 591.6L722.1 591.2L727 591.5L731.8 592.6L736.3 594.3L740.2 596.6L743.3 599.4L745.5 602.5L746.7 605.8Z" fill="#aed8e6" stroke="#12262d" stroke-width="1.6" stroke-opacity=".95" stroke-linejoin="round" />
<path d="M711.8 619.1L710.8 622.2L708.7 625L705.8 627.4L702 629.2L697.6 630.4L692.9 630.8L688 630.5L683.2 629.4L678.7 627.7L674.8 625.4L671.7 622.6L669.5 619.5L668.3 616.2L668.2 612.9L669.2 609.8L671.3 607L674.2 604.6L678 602.8L682.4 601.6L687.1 601.2L692 601.5L696.8 602.6L701.3 604.3L705.2 606.6L708.3 609.4L710.5 612.5L711.7 615.8Z" transform="translate(-2.2 2)" fill="#16282f" fill-opacity=".62" stroke="#16282f" stroke-opacity=".5" stroke-width="2.4"/><path d="M711.8 619.1L710.8 622.2L708.7 625L705.8 627.4L702 629.2L697.6 630.4L692.9 630.8L688 630.5L683.2 629.4L678.7 627.7L674.8 625.4L671.7 622.6L669.5 619.5L668.3 616.2L668.2 612.9L669.2 609.8L671.3 607L674.2 604.6L678 602.8L682.4 601.6L687.1 601.2L692 601.5L696.8 602.6L701.3 604.3L705.2 606.6L708.3 609.4L710.5 612.5L711.7 615.8Z" fill="#aed8e6" stroke="#12262d" stroke-width="1.6" stroke-opacity=".95" stroke-linejoin="round" />
<path d="M826 556Q812 540 822 524Q836 514 846 524Q850 534 840 536" transform="translate(-1.4 1.4)" fill="none" stroke="#1e3138" stroke-opacity=".5" stroke-width="5.4" stroke-linecap="round"/><path d="M826 556Q812 540 822 524Q836 514 846 524Q850 534 840 536" fill="none" stroke="#12262d" stroke-opacity=".9" stroke-width="5" stroke-linecap="round"/><path d="M826 556Q812 540 822 524Q836 514 846 524Q850 534 840 536" fill="none" stroke="#a8d4e3" stroke-width="3" stroke-linecap="round"/>
<path d="M880 590Q858 566 862 540Q872 520 890 528Q898 540 886 546" transform="translate(-1.4 1.4)" fill="none" stroke="#1e3138" stroke-opacity=".5" stroke-width="5.8" stroke-linecap="round"/><path d="M880 590Q858 566 862 540Q872 520 890 528Q898 540 886 546" fill="none" stroke="#12262d" stroke-opacity=".9" stroke-width="5.4" stroke-linecap="round"/><path d="M880 590Q858 566 862 540Q872 520 890 528Q898 540 886 546" fill="none" stroke="#a8d4e3" stroke-width="3.4" stroke-linecap="round"/>
<path d="M800 556Q786 548 790 534Q800 524 808 532" transform="translate(-1.4 1.4)" fill="none" stroke="#1e3138" stroke-opacity=".5" stroke-width="5" stroke-linecap="round"/><path d="M800 556Q786 548 790 534Q800 524 808 532" fill="none" stroke="#12262d" stroke-opacity=".9" stroke-width="4.6" stroke-linecap="round"/><path d="M800 556Q786 548 790 534Q800 524 808 532" fill="none" stroke="#a8d4e3" stroke-width="2.6" stroke-linecap="round"/>
<path d="M790 612Q776 596 790 584Q812 572 842 590Q860 600 880 604" transform="translate(-1.4 1.4)" fill="none" stroke="#1e3138" stroke-opacity=".5" stroke-width="5.6" stroke-linecap="round"/><path d="M790 612Q776 596 790 584Q812 572 842 590Q860 600 880 604" fill="none" stroke="#12262d" stroke-opacity=".9" stroke-width="5.2" stroke-linecap="round"/><path d="M790 612Q776 596 790 584Q812 572 842 590Q860 600 880 604" fill="none" stroke="#a8d4e3" stroke-width="3.2" stroke-linecap="round"/>
<path d="M846 640Q820 628 812 610Q818 600 830 606" transform="translate(-1.4 1.4)" fill="none" stroke="#1e3138" stroke-opacity=".5" stroke-width="5.4" stroke-linecap="round"/><path d="M846 640Q820 628 812 610Q818 600 830 606" fill="none" stroke="#12262d" stroke-opacity=".9" stroke-width="5" stroke-linecap="round"/><path d="M846 640Q820 628 812 610Q818 600 830 606" fill="none" stroke="#a8d4e3" stroke-width="3" stroke-linecap="round"/>
<path d="M801.4 525L801.2 526.1L800.8 527.2L800 528.1L799 528.9L797.8 529.5L796.4 529.9L795 530L793.6 529.9L792.2 529.5L791 528.9L790 528.1L789.2 527.2L788.8 526.1L788.6 525L788.8 523.9L789.2 522.8L790 521.9L791 521.1L792.2 520.5L793.6 520.1L795 520L796.4 520.1L797.8 520.5L799 521.1L800 521.9L800.8 522.8L801.2 523.9Z" transform="translate(-1.1 1)" fill="#16282f" fill-opacity=".62" stroke="#16282f" stroke-opacity=".5" stroke-width="2.4"/><path d="M801.4 525L801.2 526.1L800.8 527.2L800 528.1L799 528.9L797.8 529.5L796.4 529.9L795 530L793.6 529.9L792.2 529.5L791 528.9L790 528.1L789.2 527.2L788.8 526.1L788.6 525L788.8 523.9L789.2 522.8L790 521.9L791 521.1L792.2 520.5L793.6 520.1L795 520L796.4 520.1L797.8 520.5L799 521.1L800 521.9L800.8 522.8L801.2 523.9Z" fill="#aed8e6" stroke="#12262d" stroke-width="1" stroke-opacity=".95" stroke-linejoin="round" />
<path d="M861.4 535L861.2 536.1L860.8 537.2L860 538.1L859 538.9L857.8 539.5L856.4 539.9L855 540L853.6 539.9L852.2 539.5L851 538.9L850 538.1L849.2 537.2L848.8 536.1L848.6 535L848.8 533.9L849.2 532.8L850 531.9L851 531.1L852.2 530.5L853.6 530.1L855 530L856.4 530.1L857.8 530.5L859 531.1L860 531.9L860.8 532.8L861.2 533.9Z" transform="translate(-1.1 1)" fill="#16282f" fill-opacity=".62" stroke="#16282f" stroke-opacity=".5" stroke-width="2.4"/><path d="M861.4 535L861.2 536.1L860.8 537.2L860 538.1L859 538.9L857.8 539.5L856.4 539.9L855 540L853.6 539.9L852.2 539.5L851 538.9L850 538.1L849.2 537.2L848.8 536.1L848.6 535L848.8 533.9L849.2 532.8L850 531.9L851 531.1L852.2 530.5L853.6 530.1L855 530L856.4 530.1L857.8 530.5L859 531.1L860 531.9L860.8 532.8L861.2 533.9Z" fill="#aed8e6" stroke="#12262d" stroke-width="1" stroke-opacity=".95" stroke-linejoin="round" />
<path d="M858.9 548L858.7 549.1L858.3 550.2L857.5 551.1L856.5 551.9L855.3 552.5L853.9 552.9L852.5 553L851.1 552.9L849.7 552.5L848.5 551.9L847.5 551.1L846.7 550.2L846.3 549.1L846.1 548L846.3 546.9L846.7 545.8L847.5 544.9L848.5 544.1L849.7 543.5L851.1 543.1L852.5 543L853.9 543.1L855.3 543.5L856.5 544.1L857.5 544.9L858.3 545.8L858.7 546.9Z" transform="translate(-1.1 1)" fill="#16282f" fill-opacity=".62" stroke="#16282f" stroke-opacity=".5" stroke-width="2.4"/><path d="M858.9 548L858.7 549.1L858.3 550.2L857.5 551.1L856.5 551.9L855.3 552.5L853.9 552.9L852.5 553L851.1 552.9L849.7 552.5L848.5 551.9L847.5 551.1L846.7 550.2L846.3 549.1L846.1 548L846.3 546.9L846.7 545.8L847.5 544.9L848.5 544.1L849.7 543.5L851.1 543.1L852.5 543L853.9 543.1L855.3 543.5L856.5 544.1L857.5 544.9L858.3 545.8L858.7 546.9Z" fill="#aed8e6" stroke="#12262d" stroke-width="1" stroke-opacity=".95" stroke-linejoin="round" />
<path d="M868.4 562L868.2 563.1L867.8 564.2L867 565.1L866 565.9L864.8 566.5L863.4 566.9L862 567L860.6 566.9L859.2 566.5L858 565.9L857 565.1L856.2 564.2L855.8 563.1L855.6 562L855.8 560.9L856.2 559.8L857 558.9L858 558.1L859.2 557.5L860.6 557.1L862 557L863.4 557.1L864.8 557.5L866 558.1L867 558.9L867.8 559.8L868.2 560.9Z" transform="translate(-1.1 1)" fill="#16282f" fill-opacity=".62" stroke="#16282f" stroke-opacity=".5" stroke-width="2.4"/><path d="M868.4 562L868.2 563.1L867.8 564.2L867 565.1L866 565.9L864.8 566.5L863.4 566.9L862 567L860.6 566.9L859.2 566.5L858 565.9L857 565.1L856.2 564.2L855.8 563.1L855.6 562L855.8 560.9L856.2 559.8L857 558.9L858 558.1L859.2 557.5L860.6 557.1L862 557L863.4 557.1L864.8 557.5L866 558.1L867 558.9L867.8 559.8L868.2 560.9Z" fill="#aed8e6" stroke="#12262d" stroke-width="1" stroke-opacity=".95" stroke-linejoin="round" />
<path d="M817.4 582L817.2 583.1L816.8 584.2L816 585.1L815 585.9L813.8 586.5L812.4 586.9L811 587L809.6 586.9L808.2 586.5L807 585.9L806 585.1L805.2 584.2L804.8 583.1L804.6 582L804.8 580.9L805.2 579.8L806 578.9L807 578.1L808.2 577.5L809.6 577.1L811 577L812.4 577.1L813.8 577.5L815 578.1L816 578.9L816.8 579.8L817.2 580.9Z" transform="translate(-1.1 1)" fill="#16282f" fill-opacity=".62" stroke="#16282f" stroke-opacity=".5" stroke-width="2.4"/><path d="M817.4 582L817.2 583.1L816.8 584.2L816 585.1L815 585.9L813.8 586.5L812.4 586.9L811 587L809.6 586.9L808.2 586.5L807 585.9L806 585.1L805.2 584.2L804.8 583.1L804.6 582L804.8 580.9L805.2 579.8L806 578.9L807 578.1L808.2 577.5L809.6 577.1L811 577L812.4 577.1L813.8 577.5L815 578.1L816 578.9L816.8 579.8L817.2 580.9Z" fill="#aed8e6" stroke="#12262d" stroke-width="1" stroke-opacity=".95" stroke-linejoin="round" />
<path d="M799.4 591L799.2 592.1L798.8 593.2L798 594.1L797 594.9L795.8 595.5L794.4 595.9L793 596L791.6 595.9L790.2 595.5L789 594.9L788 594.1L787.2 593.2L786.8 592.1L786.6 591L786.8 589.9L787.2 588.8L788 587.9L789 587.1L790.2 586.5L791.6 586.1L793 586L794.4 586.1L795.8 586.5L797 587.1L798 587.9L798.8 588.8L799.2 589.9Z" transform="translate(-1.1 1)" fill="#16282f" fill-opacity=".62" stroke="#16282f" stroke-opacity=".5" stroke-width="2.4"/><path d="M799.4 591L799.2 592.1L798.8 593.2L798 594.1L797 594.9L795.8 595.5L794.4 595.9L793 596L791.6 595.9L790.2 595.5L789 594.9L788 594.1L787.2 593.2L786.8 592.1L786.6 591L786.8 589.9L787.2 588.8L788 587.9L789 587.1L790.2 586.5L791.6 586.1L793 586L794.4 586.1L795.8 586.5L797 587.1L798 587.9L798.8 588.8L799.2 589.9Z" fill="#aed8e6" stroke="#12262d" stroke-width="1" stroke-opacity=".95" stroke-linejoin="round" />
<path d="M843.4 586L843.2 587.1L842.8 588.2L842 589.1L841 589.9L839.8 590.5L838.4 590.9L837 591L835.6 590.9L834.2 590.5L833 589.9L832 589.1L831.2 588.2L830.8 587.1L830.6 586L830.8 584.9L831.2 583.8L832 582.9L833 582.1L834.2 581.5L835.6 581.1L837 581L838.4 581.1L839.8 581.5L841 582.1L842 582.9L842.8 583.8L843.2 584.9Z" transform="translate(-1.1 1)" fill="#16282f" fill-opacity=".62" stroke="#16282f" stroke-opacity=".5" stroke-width="2.4"/><path d="M843.4 586L843.2 587.1L842.8 588.2L842 589.1L841 589.9L839.8 590.5L838.4 590.9L837 591L835.6 590.9L834.2 590.5L833 589.9L832 589.1L831.2 588.2L830.8 587.1L830.6 586L830.8 584.9L831.2 583.8L832 582.9L833 582.1L834.2 581.5L835.6 581.1L837 581L838.4 581.1L839.8 581.5L841 582.1L842 582.9L842.8 583.8L843.2 584.9Z" fill="#aed8e6" stroke="#12262d" stroke-width="1" stroke-opacity=".95" stroke-linejoin="round" />
<path d="M826.4 600L826.2 601.1L825.8 602.2L825 603.1L824 603.9L822.8 604.5L821.4 604.9L820 605L818.6 604.9L817.2 604.5L816 603.9L815 603.1L814.2 602.2L813.8 601.1L813.6 600L813.8 598.9L814.2 597.8L815 596.9L816 596.1L817.2 595.5L818.6 595.1L820 595L821.4 595.1L822.8 595.5L824 596.1L825 596.9L825.8 597.8L826.2 598.9Z" transform="translate(-1.1 1)" fill="#16282f" fill-opacity=".62" stroke="#16282f" stroke-opacity=".5" stroke-width="2.4"/><path d="M826.4 600L826.2 601.1L825.8 602.2L825 603.1L824 603.9L822.8 604.5L821.4 604.9L820 605L818.6 604.9L817.2 604.5L816 603.9L815 603.1L814.2 602.2L813.8 601.1L813.6 600L813.8 598.9L814.2 597.8L815 596.9L816 596.1L817.2 595.5L818.6 595.1L820 595L821.4 595.1L822.8 595.5L824 596.1L825 596.9L825.8 597.8L826.2 598.9Z" fill="#aed8e6" stroke="#12262d" stroke-width="1" stroke-opacity=".95" stroke-linejoin="round" />
<path d="M874.4 576L874.2 577.1L873.8 578.2L873 579.1L872 579.9L870.8 580.5L869.4 580.9L868 581L866.6 580.9L865.2 580.5L864 579.9L863 579.1L862.2 578.2L861.8 577.1L861.6 576L861.8 574.9L862.2 573.8L863 572.9L864 572.1L865.2 571.5L866.6 571.1L868 571L869.4 571.1L870.8 571.5L872 572.1L873 572.9L873.8 573.8L874.2 574.9Z" transform="translate(-1.1 1)" fill="#16282f" fill-opacity=".62" stroke="#16282f" stroke-opacity=".5" stroke-width="2.4"/><path d="M874.4 576L874.2 577.1L873.8 578.2L873 579.1L872 579.9L870.8 580.5L869.4 580.9L868 581L866.6 580.9L865.2 580.5L864 579.9L863 579.1L862.2 578.2L861.8 577.1L861.6 576L861.8 574.9L862.2 573.8L863 572.9L864 572.1L865.2 571.5L866.6 571.1L868 571L869.4 571.1L870.8 571.5L872 572.1L873 572.9L873.8 573.8L874.2 574.9Z" fill="#aed8e6" stroke="#12262d" stroke-width="1" stroke-opacity=".95" stroke-linejoin="round" />
<path d="M942 642C937 641.8 937 637 930 630C923 623 907.1 610.4 900 600C892.9 589.6 889.6 578.3 887.5 567.5C885.4 556.7 885.4 544.2 887.5 535C889.6 525.8 894.6 518.2 900 512.5C905.4 506.8 911.7 503.2 920 501C928.3 498.8 940 498.2 950 499C960 499.8 970.8 502.7 980 506C989.2 509.3 997.5 513 1005 519C1012.5 525 1020.8 534.8 1025 542C1029.2 549.2 1030.7 555.7 1030 562C1029.3 568.3 1025 575 1021 580C1017 585 1009.5 590.7 1006 592C1002.5 593.3 1002.7 587.3 1000 588C997.3 588.7 992.7 593 990 596C987.3 599 986.5 603.7 984 606C981.5 608.3 977.3 607.3 975 610C972.7 612.7 970.5 618.3 970 622C969.5 625.7 973.7 630.5 972 632C970.3 633.5 965 629.3 960 631C955 632.7 947 642.2 942 642Z" transform="translate(-2.2 2)" fill="#16282f" fill-opacity=".62" stroke="#16282f" stroke-opacity=".5" stroke-width="2.4"/><path d="M942 642C937 641.8 937 637 930 630C923 623 907.1 610.4 900 600C892.9 589.6 889.6 578.3 887.5 567.5C885.4 556.7 885.4 544.2 887.5 535C889.6 525.8 894.6 518.2 900 512.5C905.4 506.8 911.7 503.2 920 501C928.3 498.8 940 498.2 950 499C960 499.8 970.8 502.7 980 506C989.2 509.3 997.5 513 1005 519C1012.5 525 1020.8 534.8 1025 542C1029.2 549.2 1030.7 555.7 1030 562C1029.3 568.3 1025 575 1021 580C1017 585 1009.5 590.7 1006 592C1002.5 593.3 1002.7 587.3 1000 588C997.3 588.7 992.7 593 990 596C987.3 599 986.5 603.7 984 606C981.5 608.3 977.3 607.3 975 610C972.7 612.7 970.5 618.3 970 622C969.5 625.7 973.7 630.5 972 632C970.3 633.5 965 629.3 960 631C955 632.7 947 642.2 942 642Z" fill="#a8d4e3" stroke="#12262d" stroke-width="1.7" stroke-opacity=".95" stroke-linejoin="round" />
<path d="M940 630C935.8 623.8 920 604.2 915 592.5C910 580.8 909.2 569.6 910 560C910.8 550.4 914.6 541.2 920 535C925.4 528.8 934.2 525 942.5 522.5C950.8 520 960.4 518.3 970 520C979.6 521.7 991.7 526.7 1000 532.5C1008.3 538.3 1016.7 551.2 1020 555" fill="none" stroke="#20353c" stroke-width="5" stroke-opacity="0.45" stroke-linecap="round"/>
<path d="M940 630C935.8 623.8 920 604.2 915 592.5C910 580.8 909.2 569.6 910 560C910.8 550.4 914.6 541.2 920 535C925.4 528.8 934.2 525 942.5 522.5C950.8 520 960.4 518.3 970 520C979.6 521.7 991.7 526.7 1000 532.5C1008.3 538.3 1016.7 551.2 1020 555" fill="none" stroke="#12262d" stroke-width="1.5" stroke-opacity="0.9" stroke-linecap="round"/>
<path d="M952.5 620C949.6 614.2 937.9 594.6 935 585C932.1 575.4 932.5 569.2 935 562.5C937.5 555.8 943.3 548.8 950 545C956.7 541.2 967.1 538.8 975 540C982.9 541.2 992.5 547.1 997.5 552.5C1002.5 557.9 1003.8 569.2 1005 572.5" fill="none" stroke="#20353c" stroke-width="5" stroke-opacity="0.45" stroke-linecap="round"/>
<path d="M952.5 620C949.6 614.2 937.9 594.6 935 585C932.1 575.4 932.5 569.2 935 562.5C937.5 555.8 943.3 548.8 950 545C956.7 541.2 967.1 538.8 975 540C982.9 541.2 992.5 547.1 997.5 552.5C1002.5 557.9 1003.8 569.2 1005 572.5" fill="none" stroke="#12262d" stroke-width="1.5" stroke-opacity="0.9" stroke-linecap="round"/>
<path d="M955 600C954.2 595.8 948.8 581.7 950 575C951.2 568.3 957.5 562.9 962.5 560C967.5 557.1 975 555.8 980 557.5C985 559.2 990.4 567.9 992.5 570" fill="none" stroke="#20353c" stroke-width="5" stroke-opacity="0.45" stroke-linecap="round"/>
<path d="M955 600C954.2 595.8 948.8 581.7 950 575C951.2 568.3 957.5 562.9 962.5 560C967.5 557.1 975 555.8 980 557.5C985 559.2 990.4 567.9 992.5 570" fill="none" stroke="#12262d" stroke-width="1.5" stroke-opacity="0.9" stroke-linecap="round"/>
<path d="M960 595C960.8 592.5 962.1 583.3 965 580C967.9 576.7 975.4 575.8 977.5 575" fill="none" stroke="#20353c" stroke-width="5" stroke-opacity="0.45" stroke-linecap="round"/>
<path d="M960 595C960.8 592.5 962.1 583.3 965 580C967.9 576.7 975.4 575.8 977.5 575" fill="none" stroke="#12262d" stroke-width="1.5" stroke-opacity="0.9" stroke-linecap="round"/>
<path d="M905 512.5C902.5 517.5 891.2 531.2 890 542.5C888.8 553.8 892.5 567.1 897.5 580C902.5 592.9 916.2 613.3 920 620" fill="none" stroke="#20353c" stroke-width="5" stroke-opacity="0.45" stroke-linecap="round"/>
<path d="M905 512.5C902.5 517.5 891.2 531.2 890 542.5C888.8 553.8 892.5 567.1 897.5 580C902.5 592.9 916.2 613.3 920 620" fill="none" stroke="#12262d" stroke-width="1.5" stroke-opacity="0.9" stroke-linecap="round"/>
<path d="M940 657.5C936.2 652.9 925 644.6 915 637.5C905 630.4 892.5 620.8 880 615C867.5 609.2 852.9 604.2 840 602.5C827.1 600.8 813.3 602.5 802.5 605C791.7 607.5 782.3 612.1 775 617.5C767.7 622.9 762.3 630 758.8 637.5C755.3 645 753.2 656.2 753.8 662.5C754.4 668.8 759.4 669.6 762.5 675C765.6 680.4 767.9 689.6 772.5 695C777.1 700.4 785 702.5 790 707.5C795 712.5 795.8 721.2 802.5 725C809.2 728.8 822.9 727.5 830 730C837.1 732.5 839.2 739.6 845 740C850.8 740.4 860 735.8 865 732.5C870 729.2 874.2 724.2 875 720C875.8 715.8 867.5 711.7 870 707.5C872.5 703.3 884.2 698.8 890 695C895.8 691.2 902.1 688.8 905 685C907.9 681.2 902.1 675.8 907.5 672.5C912.9 669.2 932.1 667.5 937.5 665C942.9 662.5 943.8 662.1 940 657.5Z" transform="translate(-2.2 2)" fill="#16282f" fill-opacity=".62" stroke="#16282f" stroke-opacity=".5" stroke-width="2.4"/><path d="M940 657.5C936.2 652.9 925 644.6 915 637.5C905 630.4 892.5 620.8 880 615C867.5 609.2 852.9 604.2 840 602.5C827.1 600.8 813.3 602.5 802.5 605C791.7 607.5 782.3 612.1 775 617.5C767.7 622.9 762.3 630 758.8 637.5C755.3 645 753.2 656.2 753.8 662.5C754.4 668.8 759.4 669.6 762.5 675C765.6 680.4 767.9 689.6 772.5 695C777.1 700.4 785 702.5 790 707.5C795 712.5 795.8 721.2 802.5 725C809.2 728.8 822.9 727.5 830 730C837.1 732.5 839.2 739.6 845 740C850.8 740.4 860 735.8 865 732.5C870 729.2 874.2 724.2 875 720C875.8 715.8 867.5 711.7 870 707.5C872.5 703.3 884.2 698.8 890 695C895.8 691.2 902.1 688.8 905 685C907.9 681.2 902.1 675.8 907.5 672.5C912.9 669.2 932.1 667.5 937.5 665C942.9 662.5 943.8 662.1 940 657.5Z" fill="#a8d4e3" stroke="#12262d" stroke-width="1.7" stroke-opacity=".95" stroke-linejoin="round" />
<path d="M935 652.5C927.5 648.8 905 635 890 630C875 625 858.3 621.7 845 622.5C831.7 623.3 818.8 628.3 810 635C801.2 641.7 795.4 653.3 792.5 662.5C789.6 671.7 792.5 685.4 792.5 690" fill="none" stroke="#20353c" stroke-width="5" stroke-opacity="0.45" stroke-linecap="round"/>
<path d="M935 652.5C927.5 648.8 905 635 890 630C875 625 858.3 621.7 845 622.5C831.7 623.3 818.8 628.3 810 635C801.2 641.7 795.4 653.3 792.5 662.5C789.6 671.7 792.5 685.4 792.5 690" fill="none" stroke="#12262d" stroke-width="1.5" stroke-opacity="0.9" stroke-linecap="round"/>
<path d="M915 655C908.3 652.9 887.5 643.8 875 642.5C862.5 641.2 849.2 643.3 840 647.5C830.8 651.7 823.3 659.6 820 667.5C816.7 675.4 817.5 687.1 820 695C822.5 702.9 832.5 711.7 835 715" fill="none" stroke="#20353c" stroke-width="5" stroke-opacity="0.45" stroke-linecap="round"/>
<path d="M915 655C908.3 652.9 887.5 643.8 875 642.5C862.5 641.2 849.2 643.3 840 647.5C830.8 651.7 823.3 659.6 820 667.5C816.7 675.4 817.5 687.1 820 695C822.5 702.9 832.5 711.7 835 715" fill="none" stroke="#12262d" stroke-width="1.5" stroke-opacity="0.9" stroke-linecap="round"/>
<path d="M897.5 660C892.9 660 877.9 657.5 870 660C862.1 662.5 853.3 668.8 850 675C846.7 681.2 847.5 691.7 850 697.5C852.5 703.3 862.5 707.9 865 710" fill="none" stroke="#20353c" stroke-width="5" stroke-opacity="0.45" stroke-linecap="round"/>
<path d="M897.5 660C892.9 660 877.9 657.5 870 660C862.1 662.5 853.3 668.8 850 675C846.7 681.2 847.5 691.7 850 697.5C852.5 703.3 862.5 707.9 865 710" fill="none" stroke="#12262d" stroke-width="1.5" stroke-opacity="0.9" stroke-linecap="round"/>
<path d="M887.5 665C885 666.7 874.6 670.8 872.5 675C870.4 679.2 874.6 687.5 875 690" fill="none" stroke="#20353c" stroke-width="5" stroke-opacity="0.45" stroke-linecap="round"/>
<path d="M887.5 665C885 666.7 874.6 670.8 872.5 675C870.4 679.2 874.6 687.5 875 690" fill="none" stroke="#12262d" stroke-width="1.5" stroke-opacity="0.9" stroke-linecap="round"/>
<path d="M800 612C795.8 615 780.8 622 775 630C769.2 638 765.5 651.7 765 660C764.5 668.3 770.8 676.7 772 680" fill="none" stroke="#20353c" stroke-width="5" stroke-opacity="0.45" stroke-linecap="round"/>
<path d="M800 612C795.8 615 780.8 622 775 630C769.2 638 765.5 651.7 765 660C764.5 668.3 770.8 676.7 772 680" fill="none" stroke="#12262d" stroke-width="1.5" stroke-opacity="0.9" stroke-linecap="round"/>
</g>
<circle cx="692.3" cy="480.6" r="3.6" fill="none" stroke="#b58be8" stroke-width="1.6"/><circle cx="692.3" cy="480.6" r="1" fill="#6a4aa8"/>
<circle cx="577.2" cy="569.6" r="3.6" fill="none" stroke="#b58be8" stroke-width="1.6"/><circle cx="577.2" cy="569.6" r="1" fill="#6a4aa8"/>
<circle cx="956" cy="666.9" r="3.6" fill="none" stroke="#b58be8" stroke-width="1.6"/><circle cx="956" cy="666.9" r="1" fill="#6a4aa8"/>

<defs><filter id="blur4" x="-50%" y="-50%" width="200%" height="200%"><feGaussianBlur stdDeviation="4"/></filter></defs>
<ellipse cx="1462" cy="180" rx="30" ry="12" fill="#000" fill-opacity=".13" filter="url(#blur4)" transform="rotate(-20 1462 180)"/>
<polygon points="1426.3,125.4 1456.6,106.2 1493.2,130.9 1467.6,153.8" fill="#f4f4f4" stroke="#9a9a9a" stroke-width=".7" stroke-dasharray="2 1.2"/>
<polygon points="1467.6,153.8 1493.2,130.9 1481.3,161.2 1455.2,186" fill="#dedede" stroke="#8a8a8a" stroke-width=".7" stroke-dasharray="2 1.4"/>
<polygon points="1426.3,125.4 1467.6,153.8 1455.2,186 1419.4,159.8" fill="#ececec" stroke="#9a9a9a" stroke-width=".6"/>
<text transform="matrix(.824 .567 -.62 .39 1461.8 129.6)" font-size="10.5" fill="#8c8c8c" text-anchor="middle" font-family="Liberation Sans, sans-serif" dominant-baseline="central">TOP</text>
<text transform="matrix(.824 .567 -.18 .9 1441.6 157.6)" font-size="9.4" fill="#8c8c8c" text-anchor="middle" font-family="Liberation Sans, sans-serif" dominant-baseline="central">FRONT</text>
<path d="M1424.9 121.300L1419.400 159.800" stroke="#5454d8" stroke-width="1.5"/><path d="M1419.400 159.800L1460.700 191.500" stroke="#f09494" stroke-width="1.8"/>
<text x="1425.6" y="117.4" font-size="11.5" fill="#5a5ad6" text-anchor="middle" font-family="Liberation Sans, sans-serif">Z</text>
<text x="1466.4" y="201.4" font-size="11.5" fill="#e86a6a" text-anchor="middle" font-family="Liberation Sans, sans-serif">X</text>

</svg>
<div id="toolbar">
<svg width="1499" height="81" viewBox="0 0 1499 81" style="position:absolute;left:0;top:0"><rect x="13.5" y="11.4" width="108.5" height="59.6" rx="4.500" fill="#f3f3f3" stroke="#d8d8d8" stroke-width="1.2"/>
<text x="23.3" y="44.85" textLength="79.2" lengthAdjust="spacingAndGlyphs" font-size="10.2" fill="#2e2e2e" font-weight="bold" font-family="Liberation Sans, sans-serif" >MANUFACTURE</text>
<path d="M107.5 39.1h6.6l-3.3 3.8z" fill="#2e2e2e"/>
<text x="150.9" y="14.96" textLength="39.2" lengthAdjust="spacingAndGlyphs" font-size="10.5" fill="#1b8fd0" font-weight="normal" font-family="Liberation Sans, sans-serif" >MILLING</text>
<text x="233.8" y="14.96" textLength="43.7" lengthAdjust="spacingAndGlyphs" font-size="10.5" fill="#3c3c3c" font-weight="normal" font-family="Liberation Sans, sans-serif" >TURNING</text>
<text x="322" y="14.96" textLength="45.6" lengthAdjust="spacingAndGlyphs" font-size="10.5" fill="#3c3c3c" font-weight="normal" font-family="Liberation Sans, sans-serif" >ADDITIVE</text>
<text x="415.2" y="14.96" textLength="57.8" lengthAdjust="spacingAndGlyphs" font-size="10.5" fill="#3c3c3c" font-weight="normal" font-family="Liberation Sans, sans-serif" >INSPECTION</text>
<text x="517.8" y="14.96" textLength="65.8" lengthAdjust="spacingAndGlyphs" font-size="10.5" fill="#3c3c3c" font-weight="normal" font-family="Liberation Sans, sans-serif" >FABRICATION</text>
<text x="631" y="14.96" textLength="43.9" lengthAdjust="spacingAndGlyphs" font-size="10.5" fill="#3c3c3c" font-weight="normal" font-family="Liberation Sans, sans-serif" >UTILITIES</text>
<rect x="139.3" y="21.5" width="63.2" height="2.7" fill="#0f8fd2"/>
<text x="152.4" y="75.69" textLength="31.6" lengthAdjust="spacingAndGlyphs" font-size="10.3" fill="#3a3a3a" font-weight="normal" font-family="Liberation Sans, sans-serif" >SETUP</text>
<path d="M186.7 69.1h6.6l-3.3 3.8z" fill="#222"/>
<text x="280" y="75.69" textLength="12.2" lengthAdjust="spacingAndGlyphs" font-size="10.3" fill="#3a3a3a" font-weight="normal" font-family="Liberation Sans, sans-serif" >2D</text>
<path d="M295.5 69.1h6.6l-3.3 3.8z" fill="#222"/>
<text x="463" y="75.69" textLength="12.5" lengthAdjust="spacingAndGlyphs" font-size="10.3" fill="#3a3a3a" font-weight="normal" font-family="Liberation Sans, sans-serif" >3D</text>
<path d="M478.7 69.1h6.6l-3.3 3.8z" fill="#222"/>
<text x="610.3" y="75.69" textLength="44.4" lengthAdjust="spacingAndGlyphs" font-size="10.3" fill="#3a3a3a" font-weight="normal" font-family="Liberation Sans, sans-serif" >DRILLING</text>
<path d="M657.4 69.1h6.6l-3.3 3.8z" fill="#222"/>
<text x="701.8" y="75.69" textLength="55" lengthAdjust="spacingAndGlyphs" font-size="10.3" fill="#3a3a3a" font-weight="normal" font-family="Liberation Sans, sans-serif" >MULTI-AXIS</text>
<path d="M759.7 69.1h6.6l-3.3 3.8z" fill="#222"/>
<text x="825.5" y="75.69" textLength="36.7" lengthAdjust="spacingAndGlyphs" font-size="10.3" fill="#3a3a3a" font-weight="normal" font-family="Liberation Sans, sans-serif" >MODIFY</text>
<path d="M866.7 69.1h6.6l-3.3 3.8z" fill="#222"/>
<text x="962.2" y="75.69" textLength="44.1" lengthAdjust="spacingAndGlyphs" font-size="10.3" fill="#3a3a3a" font-weight="normal" font-family="Liberation Sans, sans-serif" >ACTIONS</text>
<path d="M1009.7 69.1h6.6l-3.3 3.8z" fill="#222"/>
<text x="1124.6" y="75.69" textLength="43.8" lengthAdjust="spacingAndGlyphs" font-size="10.3" fill="#3a3a3a" font-weight="normal" font-family="Liberation Sans, sans-serif" >MANAGE</text>
<path d="M1171.7 69.1h6.6l-3.3 3.8z" fill="#222"/>
<text x="1257.3" y="75.69" textLength="39.7" lengthAdjust="spacingAndGlyphs" font-size="10.3" fill="#3a3a3a" font-weight="normal" font-family="Liberation Sans, sans-serif" >INSPECT</text>
<path d="M1300.5 69.1h6.6l-3.3 3.8z" fill="#222"/>
<text x="1336.7" y="75.69" textLength="36.7" lengthAdjust="spacingAndGlyphs" font-size="10.3" fill="#3a3a3a" font-weight="normal" font-family="Liberation Sans, sans-serif" >SELECT</text>
<path d="M1376.5 69.1h6.6l-3.3 3.8z" fill="#222"/>
<rect x="222.1" y="27" width="1.4" height="50" fill="#dcdcdc"/>
<rect x="362.3" y="27" width="1.4" height="50" fill="#dcdcdc"/>
<rect x="589.1" y="27" width="1.4" height="50" fill="#dcdcdc"/>
<rect x="685.1" y="27" width="1.4" height="50" fill="#dcdcdc"/>
<rect x="778.8" y="27" width="1.4" height="50" fill="#dcdcdc"/>
<rect x="919" y="27" width="1.4" height="50" fill="#dcdcdc"/>
<rect x="1059.3" y="27" width="1.4" height="50" fill="#dcdcdc"/>
<rect x="1241.9" y="27" width="1.4" height="50" fill="#dcdcdc"/>
<rect x="1321.3" y="27" width="1.4" height="50" fill="#dcdcdc"/>
<g transform="translate(138 30)" ><path d="M.6 25.4V.6H11.4L13 3.4H23V9.6" fill="none" stroke="#3d3d3d" stroke-width="1.1"/><path d="M6.2 11Q6 4.6 12.6 2.6Q17.4 4.6 20.8 8.4V13.4L13 18L6.2 13.6Z" fill="#e9eff6" stroke="#8c8c8c" stroke-width="1"/><path d="M7 10.4L12.4 16L20.2 11L20.4 13.6L12.6 18.6L6.6 14Z" fill="#c9dcef"/><path d="M.6 25.4L8 10.4H31L23.4 25.4Z" fill="#f1f1f1" fill-opacity=".78" stroke="#3d3d3d" stroke-width="1.1" stroke-linejoin="round"/></g>
<g transform="translate(183 27.3)" ><rect x=".6" y=".6" width="25.8" height="30" fill="#f6f6f6" stroke="#3d3d3d" stroke-width="1.2"/><text x="13.6" y="13" font-size="11" font-weight="bold" fill="#1b8fd0" text-anchor="middle" font-family="Liberation Sans, sans-serif">G</text><rect x="4.2" y="17.6" width="2.6" height="2.6" fill="#3d3d3d"/><rect x="9" y="18.4" width="14" height="1.1" fill="#3d3d3d"/><rect x="4.2" y="23.6" width="2.6" height="2.6" fill="#3d3d3d"/><rect x="9" y="24.4" width="14" height="1.1" fill="#3d3d3d"/></g>
<g transform="translate(234.8 27)" ><path d="M.9 13.1L16.8 23.8V30.4L.9 18.2Z" fill="#ececec" stroke="#3d3d3d" stroke-width="1" stroke-linejoin="round"/><path d="M16.8 23.8L31.8 12.1V17.7L16.8 30.4Z" fill="#d6d6d6" stroke="#3d3d3d" stroke-width="1" stroke-linejoin="round"/><path d="M.9 13.1L16.3 1.4L31.8 12.1L16.8 23.8Z" fill="#4f9fe3"/><path d="M1.2 15.4L21.9 .5A2.9 2.9 0 0 1 26.8 5.600L5.600 21A2.9 2.9 0 0 0 8.400 26.200L30.400 10.700" fill="none" stroke="#163d6b" stroke-width="1.15" stroke-linejoin="round"/><path d="M1.2 15.4A2.9 2.9 0 0 0 4.2 19.6L24.8 4.4M5 24.6L29.6 7" fill="none" stroke="#163d6b" stroke-width="1.1" stroke-opacity=".0"/></g>
<g transform="translate(277.8 27)" ><path d="M16 .8L31.4 12.4V18L16 31L.8 18V12.4Z" fill="#f4f4f4" stroke="#3d3d3d" stroke-width="1.1" stroke-linejoin="round"/><path d="M4.6 17Q6 11 16 9.4Q26 11 27.6 17L16 26.6Z" fill="#dcdcdc"/><path d="M5.6 19Q8 13.4 16 12.2Q24 13.4 26.6 19L16 27.6Z" fill="#4f9fe3"/><path d="M7.4 19.2Q11 14.6 16 14.4Q21 14.6 24.8 19.2Q21 23.6 16 23.4Q11 23.6 7.4 19.2ZM9 19.4Q13 16 16 19Q19 22 23 19" fill="none" stroke="#163d6b" stroke-width="1.1"/></g>
<g transform="translate(321.7 28.9)" ><path d="M15.4 3.3L30.4 14.5L15.4 27.1L.5 14.5Z" fill="none" stroke="#2b8fda" stroke-width="1.1"/><path d="M4.7 9.3L15.4 17.3V22.9L4.7 14.5Z" fill="#5aa6e8"/><path d="M15.4 17.3L25.7 9.3V14.5L15.4 22.9Z" fill="#3f8ede"/><path d="M15.4 .6L25.7 9.3L15.4 17.3L4.7 9.3Z" fill="#f6f6f6" stroke="#3d3d3d" stroke-width="1" stroke-linejoin="round"/></g>
<g transform="translate(376 28)" ><path d="M.8 8.6L8 .8H29.4V21.4L22.4 29H.8Z" fill="#ececec" stroke="#3d3d3d" stroke-width="1.1" stroke-linejoin="round"/><path d="M.8 8.6H22.4V29" fill="none" stroke="#3d3d3d" stroke-width="1"/><path d="M1.4 9.2H6.6V22.6L1.4 28.4Z" fill="#d4d4d4"/><path d="M7 9.4L10.4 4.6H25.8V19.4L22 23.4H7Z" fill="#4f9fe3"/><path d="M6 15Q12 9.4 18 10.2L26.6 9.6M10 13.2L25 12.8M6 21Q12 15.4 18 16.2L26.6 15.6M10 19.2L25 18.8" fill="none" stroke="#163d6b" stroke-width="1.1"/></g>
<g transform="translate(418 27)" ><g opacity=".45"><path d="M1 20L17 9L31 17L15 29Z" fill="#eef0f4" stroke="#b9c3d4" stroke-width="1"/><path d="M1 20V23L15 32V29Z" fill="#dfe3ea"/><path d="M8 20L16 14.6L23 18.6L15 24Z" fill="none" stroke="#b9c8e0"/></g></g>
<g transform="translate(441.6 34.6)" opacity="0.8"><circle r="7.8" fill="#93cdea"/><g transform="rotate(45)" fill="#fff"><rect x="-2.6" y="-1.6" width="5.2" height="3.6" rx="1"/><rect x="-1.9" y="-4.2" width="1" height="2.8"/><rect x=".9" y="-4.2" width="1" height="2.8"/><rect x="-.6" y="1.8" width="1.2" height="3.4"/></g></g><g transform="translate(461.7 27)" ><path d="M.8 8L8.6 .8H30.6V21L22 29.2H.8Z" fill="#f2f2f2" stroke="#3d3d3d" stroke-width="1.1" stroke-linejoin="round"/><path d="M1.4 8.4H22Q26 3 30 2.4V20.6L22 28.4Z" fill="#d6d6d6"/><path d="M1.4 22H22V28.6H1.4Z" fill="#e3e3e3"/><path d="M1.4 8.4H22.4Q24 4 26.4 2.6L30 1.4V2Q25 4 22.4 10V21.8H1.4Z" fill="#4f9fe3"/><path d="M.6 27.6Q5 25 6.4 16Q7.4 4.4 10.6 4Q13.6 4.4 12.4 14Q11.4 25 14.6 25.4Q18 25 19.4 14Q20.6 5 24 3.4" fill="none" stroke="#163d6b" stroke-width="1.1"/><path d="M22.4 8.4V29" stroke="#3d3d3d" stroke-width="1" fill="none"/></g>
<g transform="translate(505 30)" ><ellipse cx="15.5" cy="14.6" rx="14.9" ry="9.4" fill="#f0f0f0" stroke="#3d3d3d" stroke-width="1.1"/><path d="M.8 13.4Q1 3 15.5 .8Q30 3 30.2 13.4Q24 18.6 15.5 18.6Q7 18.6 .8 13.4Z" fill="#4f9fe3"/><path d="M15.5 3Q20 3.4 23.6 8.4Q25.4 12 21 12.8Q15.5 13.6 10 12.8Q5.6 12 7.4 8.4Q11 3.4 15.5 3ZM15.5 6.4Q17.6 6.8 19.4 9Q20 10.6 15.5 10.8Q11 10.6 11.6 9Q13.4 6.8 15.5 6.4Z" fill="none" stroke="#163d6b" stroke-width="1.1"/></g>
<g transform="translate(548 28)" ><path d="M.8 22.4L22 22L29.4 16V21.6L22 28.4H.8Z" fill="#e4e4e4" stroke="#3d3d3d" stroke-width="1" stroke-linejoin="round"/><path d="M7 1.6Q9.6 -.2 12.4 1.6Q14 10 20 13Q26 15.6 29.4 16L22 22.4H.8Q4.6 15 5.4 9Q6 4 7 1.6Z" fill="#4f9fe3"/><ellipse cx="9.7" cy="1.8" rx="2.7" ry="1.1" fill="#eaf3fb"/><path d="M5.8 7Q10 8.6 13.6 6.4M4.6 12.4Q11 15 17.6 11.2M2.8 18Q13 21 22.4 14.4" fill="none" stroke="#163d6b" stroke-width="1.1"/></g>
<g transform="translate(600.7 27.3)" ><path d="M.8 18.6L8.6 8.4H32V14L22 24.6H.8Z" fill="#f1f1f1" stroke="#3d3d3d" stroke-width="1.1" stroke-linejoin="round"/><path d="M.8 18.6H22L32 8.4" fill="none" stroke="#3d3d3d"/><path d="M1.4 19.2H21.6V24H1.4Z" fill="#dcdcdc"/><path d="M11.6 3.4V28Q16.4 32.4 21.4 28V3.4Z" fill="#9a9a9a" stroke="#3d3d3d" stroke-width="1.1"/><path d="M12.2 10L20.8 4.4V8L12.2 13.6ZM12.2 27L20.8 21V25L14 29.6Z" fill="#d9d9d9"/><ellipse cx="16.5" cy="3.6" rx="4.9" ry="2.8" fill="#cfcfcf" stroke="#3d3d3d" stroke-width="1.1"/><path d="M11.6 15V23.6H21.4V15" fill="#eef5fc" fill-opacity=".85" stroke="#2b8fda" stroke-width="1.1"/></g>
<g transform="translate(644.7 27)" ><g opacity=".4"><path d="M1 20L9 12H31V16L22 25H1Z" fill="#eceef2" stroke="#c2c6cf"/><path d="M12 22V30Q16 33 20 30V22Z" fill="#d8dade"/><path d="M3 6.4H10M6.5 3V10" stroke="#f0a0a8" stroke-width="1"/><path d="M12 4H20V12H12Z" fill="#f4f6fa" stroke="#c9cfdb"/></g></g>
<g transform="translate(667.4 35)" opacity="0.75"><circle r="7.8" fill="#93cdea"/><g transform="rotate(45)" fill="#fff"><rect x="-2.6" y="-1.6" width="5.2" height="3.6" rx="1"/><rect x="-1.9" y="-4.2" width="1" height="2.8"/><rect x=".9" y="-4.2" width="1" height="2.8"/><rect x="-.6" y="1.8" width="1.2" height="3.4"/></g></g><g transform="translate(717.4 26.7)" ><path d="M1 9.6H14V22.6H1Z" fill="#a9cdef"/><path d="M14 12L30 16V22L19 30L14 22.6Z" fill="#bcd6ee"/><path d="M19 30L31 20V25L20 31Z" fill="#dfe3e8"/><path d="M11 2.2L17.6 1L12.8 27Q9.6 28.6 7.4 26Z" fill="#d9d9d9" stroke="#c4c4c4" stroke-width=".8" transform="rotate(12 12 14)"/><circle cx="24.7" cy="8" r="7.8" fill="#0f8fd6"/><path d="M22.8 6.6v6.4M19.6 9.8h6.4" stroke="#fff" stroke-width="1.6"/><path d="M27.6 3.2v3.2M26 4.8h3.2M28.6 8.4v2M27.6 9.4h2" stroke="#fff" stroke-width=".9"/></g>
<g transform="translate(793.5 26.8)" ><g opacity=".38"><path d="M1 8H12M3 14Q1 10 6 10H14" fill="none" stroke="#e8a0a0" stroke-width=".9"/><circle cx="14" cy="26" r="3" fill="none" stroke="#8a8a8a" stroke-width="1.6"/><circle cx="24" cy="26" r="3" fill="none" stroke="#8a8a8a" stroke-width="1.6"/><path d="M15.4 23.4L22 10M22.6 23.4L16 10" stroke="#a0a0a0" stroke-width="1.8"/></g></g>
<g transform="translate(815.8 35.1)" opacity="0.75"><circle r="8" fill="#93cdea"/><g transform="rotate(45)" fill="#fff"><rect x="-2.6" y="-1.6" width="5.2" height="3.6" rx="1"/><rect x="-1.9" y="-4.2" width="1" height="2.8"/><rect x=".9" y="-4.2" width="1" height="2.8"/><rect x="-.6" y="1.8" width="1.2" height="3.4"/></g></g><g transform="translate(836 26.8)" ><g opacity=".38"><path d="M2 20L14 10Q17 8 19 10Q20 12 18 14L8 22M4 23L16 14" fill="none" stroke="#b9c0cc" stroke-width="1.1"/><path d="M17 19L28 30M28 19L17 30" stroke="#e99" stroke-width="2.6"/></g></g>
<g transform="translate(858.4 35.1)" opacity="0.75"><circle r="8" fill="#93cdea"/><g transform="rotate(45)" fill="#fff"><rect x="-2.6" y="-1.6" width="5.2" height="3.6" rx="1"/><rect x="-1.9" y="-4.2" width="1" height="2.8"/><rect x=".9" y="-4.2" width="1" height="2.8"/><rect x="-.6" y="1.8" width="1.2" height="3.4"/></g></g><g transform="translate(878.7 26.8)" ><g opacity=".38"><path d="M3 6H10V16L8.4 19H4.6L3 16Z" fill="#dcdcdc"/><path d="M22 14H28V24L26.6 27H23.4L22 24Z" fill="#dcdcdc"/><path d="M8 29H24M8 29l2 -1.6M8 29l2 1.6M24 29l-2 -1.6M24 29l-2 1.6" stroke="#c4c8d0" stroke-width=".9" fill="none"/></g></g>
<g transform="translate(901.9 35.1)" opacity="0.75"><circle r="8" fill="#93cdea"/><g transform="rotate(45)" fill="#fff"><rect x="-2.6" y="-1.6" width="5.2" height="3.6" rx="1"/><rect x="-1.9" y="-4.2" width="1" height="2.8"/><rect x=".9" y="-4.2" width="1" height="2.8"/><rect x="-.6" y="1.8" width="1.2" height="3.4"/></g></g><g transform="translate(933.8 26.8)" ><path d="M14 6.6L27.4 18L14 30.2L.6 18Z" fill="none" stroke="#2b8fda" stroke-width="1.2"/><path d="M13.6 13L20.6 18.4L13.6 24L8.6 18.4Z" fill="none" stroke="#2b8fda" stroke-width="1.1"/><path d="M14.4 5H20.6V17.4Q17.4 20 14.4 17.4Z" fill="#8c8c8c" stroke="#555" stroke-width=".8"/><path d="M14.8 11.6L20.2 8V10.6L14.8 14.2Z" fill="#cfcfcf"/><rect x="12.8" y=".8" width="9.4" height="4.6" rx="1.6" fill="#c8c8c8" stroke="#666" stroke-width=".9"/></g>
<g transform="translate(977 27.4)" ><rect x=".6" y=".6" width="25.8" height="29.8" fill="#f6f6f6" stroke="#3d3d3d" stroke-width="1.2"/><text x="13.6" y="14" font-size="10.5" font-weight="bold" fill="#1b8fd0" text-anchor="middle" font-family="Liberation Mono, monospace" textLength="15" lengthAdjust="spacingAndGlyphs">G1</text><text x="13.6" y="25.4" font-size="10.5" font-weight="bold" fill="#1b8fd0" text-anchor="middle" font-family="Liberation Mono, monospace" textLength="15" lengthAdjust="spacingAndGlyphs">G2</text></g>
<g transform="translate(1021.8 28.1)" ><rect x=".6" y=".6" width="23" height="27.4" fill="#f6f6f6" stroke="#3d3d3d" stroke-width="1.2"/><rect x="5.6" y="4.6" width="13" height="4.6" fill="none" stroke="#3d3d3d" stroke-width="1"/><path d="M5.2 13.4H19M5.2 18H19M5.2 22.6H19" stroke="#3d3d3d" stroke-width="1.1"/></g>
<g transform="translate(1071.3 26.8)" ><rect x="12.4" y="4.4" width="6.6" height="21" fill="#bdbdbd"/><rect x=".8" y=".8" width="10.6" height="6" fill="#dcdcdc" stroke="#8a8a8a" stroke-width=".9"/><rect x="5.2" y="6.8" width="1.6" height="13.4" fill="#8a8a8a"/><circle cx="6" cy="21.6" r="2" fill="#e5383b"/><path d="M11.6 20.8L18.4 20L18 27L12 28Z" fill="#f2a900"/><rect x="13.8" y="22.4" width="2.4" height="2.4" fill="#fff4c4"/><rect x="20.6" y="8.8" width="11" height="6.6" fill="#d4d4d4" stroke="#8a8a8a" stroke-width=".9"/><path d="M23 15.4H29V29.6L26 31.6L23 29.6Z" fill="#9a9a9a" stroke="#6a6a6a" stroke-width=".8"/><path d="M23.4 20.6L28.6 17.4V19.6L23.4 22.8ZM23.4 26.6L28.6 23.4V25.6L23.4 28.8Z" fill="#dedede"/></g>
<g transform="translate(1115 30.2)" ><path d="M.8 7Q.8 1 7 .8H25Q31.4 1 31.6 7V21H.8Z" fill="#e2e4e6" stroke="#b4b8bc" stroke-width=".9"/><rect x=".8" y="20" width="30.8" height="4.8" fill="#1f5a94"/><rect x="9" y="3" width="13" height="17" fill="#8db8e4"/><rect x="12" y="7.6" width="7.6" height="6" fill="#e9f1f9" stroke="#5f7fa0" stroke-width=".8"/><rect x="24" y="8.6" width="5.4" height="8.4" fill="#f6f6f6" stroke="#6b7a99" stroke-width=".8"/><rect x="25.2" y="10" width="1.4" height="1.4" fill="#e5383b"/><rect x="27" y="10" width="1.4" height="1.4" fill="#2b6fb8"/><rect x="25.2" y="12.4" width="1.4" height="1.4" fill="#e5383b"/><rect x="27" y="13.6" width="1.4" height="1.4" fill="#2b6fb8"/></g>
<g transform="translate(1160.5 26.8)" ><path d="M.8 .8H12V22H.8Z" fill="#f6f6f6" stroke="#3d3d3d" stroke-width="1"/><path d="M4.2 4H15.6V26H4.2Z" fill="#f6f6f6" stroke="#3d3d3d" stroke-width="1"/><path d="M8 7.4H19.4L26.8 15V31H8Z" fill="#f8f8f8" stroke="#3d3d3d" stroke-width="1.1" stroke-linejoin="round"/><path d="M19.4 7.4V15H26.8Z" fill="#5a5a5a" stroke="#3d3d3d" stroke-width="1" stroke-linejoin="round"/><text x="16.4" y="28.6" font-size="12.5" font-weight="bold" fill="#1680d0" text-anchor="middle" font-family="Liberation Sans, sans-serif">G</text></g>
<g transform="translate(1203.3 26.8)" ><path d="M.8 .8H12V22H.8Z" fill="#f6f6f6" stroke="#3d3d3d" stroke-width="1"/><path d="M4.2 4H15.6V26H4.2Z" fill="#f6f6f6" stroke="#3d3d3d" stroke-width="1"/><path d="M8 7.4H19.4L26.8 15V31H8Z" fill="#f8f8f8" stroke="#3d3d3d" stroke-width="1.1" stroke-linejoin="round"/><path d="M19.4 7.4V15H26.8Z" fill="#5a5a5a" stroke="#3d3d3d" stroke-width="1" stroke-linejoin="round"/><path d="M10.6 20.4L19 15.4Q21.6 14.4 22.2 16.4Q22.4 18 20.6 19L12.6 23.6Q10.6 25 11.6 26.6Q12.8 27.8 14.6 26.8L23.6 21.6" fill="none" stroke="#2b8fda" stroke-width="1.3"/></g>
<g transform="translate(1268.7 34)" ><path d="M.8 .6V9.6M27.6 .6V9.6M1.6 5.2H26.8" stroke="#555" stroke-width="1" fill="none"/><path d="M1.4 5.2L5 3.4V7ZM27 5.2L23.4 3.4V7Z" fill="#555"/><rect x=".4" y="11" width="27.6" height="6" fill="#f5b200"/><path d="M3 11v2.6M5.5 11v1.8M8 11v2.6M10.500 11v1.8M13 11v2.6M15.5 11v1.8M18 11v2.6M20.5 11v1.8M23 11v2.6M25.5 11v1.8" stroke="#a87400" stroke-width=".7"/></g>
<g transform="translate(1340.8 24)" ><rect width="38" height="37.5" fill="#0f90d9"/><rect x="3.6" y="3.6" width="27.6" height="21.4" fill="none" stroke="#9de9cb" stroke-width="1.1" stroke-dasharray="3.2 2"/><path d="M23.2 17.2V33.6L27 30L29.6 35.2L32 34L29.4 29H34.6Z" fill="#fff"/></g>
</svg>
</div>
<svg id="browser" width="320" height="470" viewBox="0 0 320 470" style="position:absolute;left:0;top:0"><defs><linearGradient id="gtri" x1="0" y1="0" x2="1" y2="1"><stop offset="0.3" stop-color="#e2e2e2"/><stop offset="1" stop-color="#3c3c3c"/></linearGradient></defs>
<rect x="5.5" y="87" width="299" height="23" fill="#f1f1f1" stroke="#c6c6c6"/>
<path d="M15 95.4v6.2l-4.4 -3.1zM20.2 95.4v6.2l-4.4 -3.1z" fill="#222"/>
<text x="30.4" y="102.65" textLength="51.6" lengthAdjust="spacingAndGlyphs" font-size="11.3" fill="#555" font-weight="normal" font-family="Liberation Sans, sans-serif" >BROWSER</text>
<circle cx="288.4" cy="98.5" r="4.4" fill="#1e1e1e"/><rect x="285.8" y="97.7" width="5.2" height="1.6" fill="#fff"/>
<path d="M300.6 93v11M302.6 94.5v8" stroke="#555" stroke-width="1"/>
<defs></defs><path d="M32.7 131.2v-10.6l-10.6 10.6z" fill="url(#gtri)" stroke="#222" stroke-width="1" stroke-linejoin="miter"/>
<rect x="41.2" y="116" width="114.9" height="19.6" fill="#eeeeee"/>
<g transform="translate(52.1 125.9)"><path d="M-8 0Q-4 -5 0 -5Q4 -5 8 0Q4 5 0 5Q-4 5 -8 0Z" fill="#9e9e9e"/><circle r="2.9" fill="#f2f2f2"/><circle r="1.6" fill="#9e9e9e"/></g>
<g transform="translate(69 117.9)" stroke="#3a3a3a" stroke-width="1.2" stroke-linejoin="round" fill="#f4f5f6"><path d="M1.2 2.2L3 .6H8.4L9.4 2.2V7L14 7L15.4 8.4V12.6L13 15.4H2.2L1.2 14.4Z"/><path d="M6.4 15.4V9.2L9.4 7M1.6 9H6.4M6.4 9.2L4.4 9" fill="none" stroke-width="1"/><path d="M2 2.6H7.4V8.6H2Z" fill="#e3e6e8" stroke="none"/><path d="M7.4 10H12.8V14.6H7.4Z" fill="#e3e6e8" stroke="none"/></g>
<text x="99.7" y="130.04" textLength="47.3" lengthAdjust="spacingAndGlyphs" font-size="11" fill="#3d4450" font-weight="normal" font-family="Liberation Sans, sans-serif" >CAM Root</text>
<rect x="59" y="140.2" width="89.7" height="19.6" fill="#eeeeee"/>
<g transform="translate(62 141.9)"><path d="M2 .8H9.6L13.6 4.8V12.4H2Z" fill="#e6e9ec" stroke="#3a3a3a" stroke-width="1.2" stroke-linejoin="round"/><path d="M9.4 1V5H13.4" fill="#fff" stroke="#3a3a3a" stroke-width="1"/><rect x=".8" y="12.6" width="14" height="3" rx=".8" fill="#f7b500" stroke="#e09a00" stroke-width=".8"/><path d="M3 12.8v1.4M5 12.8v1.4M7 12.8v1.4M9 12.8v1.4M11 12.8v1.4M13 12.8v1.4" stroke="#fff7d6" stroke-width=".7"/></g>
<text x="92.2" y="154.24" textLength="46.2" lengthAdjust="spacingAndGlyphs" font-size="11" fill="#3d4450" font-weight="normal" font-family="Liberation Sans, sans-serif" >Units: mm</text>
<path d="M41.3 168.6v11.4l8.6 -5.7z" fill="#fff" stroke="#222" stroke-width="1.4" stroke-linejoin="round"/>
<rect x="59" y="164.4" width="109.8" height="19.6" fill="#eeeeee"/>
<g transform="translate(62.3 167.6)"><path d="M0 1.2H5.6L6.8 2.6H15.6V12H0Z" fill="#9b9b9b"/><path d="M0 3.8H15.6" stroke="#c9c9c9" stroke-width=".8"/></g>
<text x="92.2" y="178.44" textLength="67.6" lengthAdjust="spacingAndGlyphs" font-size="11" fill="#3d4450" font-weight="normal" font-family="Liberation Sans, sans-serif" >Named Views</text>
<defs></defs><path d="M50.9 203.5v-10.6l-10.6 10.6z" fill="url(#gtri)" stroke="#222" stroke-width="1" stroke-linejoin="miter"/>
<rect x="59" y="188.3" width="103.1" height="19.6" fill="#eeeeee"/>
<g transform="translate(69.8 198.2)"><path d="M-8 0Q-4 -5 0 -5Q4 -5 8 0Q4 5 0 5Q-4 5 -8 0Z" fill="#9e9e9e"/><circle r="2.9" fill="#f2f2f2"/><circle r="1.6" fill="#9e9e9e"/></g>
<g transform="translate(86.8 190.2)" stroke="#3a3a3a" stroke-width="1.2" stroke-linejoin="round" fill="#f4f5f6"><path d="M1.2 2.2L3 .6H8.4L9.4 2.2V7L14 7L15.4 8.4V12.6L13 15.4H2.2L1.2 14.4Z"/><path d="M6.4 15.4V9.2L9.4 7M1.6 9H6.4M6.4 9.2L4.4 9" fill="none" stroke-width="1"/><path d="M2 2.6H7.4V8.6H2Z" fill="#e3e6e8" stroke="none"/><path d="M7.4 10H12.8V14.6H7.4Z" fill="#e3e6e8" stroke="none"/></g>
<text x="117.2" y="202.34" textLength="33.8" lengthAdjust="spacingAndGlyphs" font-size="11" fill="#3d4450" font-weight="normal" font-family="Liberation Sans, sans-serif" >Models</text>
<path d="M59.4 216.4v11.4l8.6 -5.7z" fill="#fff" stroke="#222" stroke-width="1.4" stroke-linejoin="round"/>
<rect x="76.8" y="212.2" width="159.8" height="19.6" fill="#eeeeee"/>
<g transform="translate(88 222.1)"><path d="M-8 0Q-4 -5 0 -5Q4 -5 8 0Q4 5 0 5Q-4 5 -8 0Z" fill="#9e9e9e"/><circle r="2.9" fill="#f2f2f2"/><circle r="1.6" fill="#9e9e9e"/></g>
<g transform="translate(105 214.1)" stroke="#3a3a3a" stroke-width="1.2" stroke-linejoin="round"><path d="M1 5L4 1.2H15.2V11.4L12.2 15H1Z" fill="#f5f6f7"/><path d="M1.6 5.4H11.8V14.6H1.6Z" fill="#e4e7e9" stroke="none"/><path d="M12 5.2L15 1.6" fill="none" stroke-width="1"/><path d="M1 5H12V15" fill="none" stroke-width="1"/></g>
<rect x="127.2" y="212.3" width="84.4" height="19.6" fill="#a7cdf9"/>
<text x="135" y="226.24" textLength="69" lengthAdjust="spacingAndGlyphs" font-size="11" fill="#1a3566" font-weight="bold" font-family="Liberation Sans, sans-serif" >Rezba01 v1:1</text>
<circle cx="222.5" cy="222.1" r="5.9" fill="#fff" stroke="#222" stroke-width="1.2"/><circle cx="222.5" cy="222.1" r="2.5" fill="#222"/>
<defs></defs><path d="M50.9 251.4v-10.6l-10.6 10.6z" fill="url(#gtri)" stroke="#222" stroke-width="1" stroke-linejoin="miter"/>
<rect x="59" y="236.2" width="105.5" height="19.6" fill="#eeeeee"/>
<g transform="translate(63 238.1)"><rect x=".6" y=".6" width="13.2" height="14.6" fill="#f7f7f7" stroke="#3a3a3a" stroke-width="1.2"/><text x="7.4" y="6.4" font-size="6" font-weight="bold" fill="#1b8fd0" text-anchor="middle" font-family="Liberation Sans, sans-serif">G</text><rect x="2.6" y="8.2" width="1.6" height="1.6" fill="#3a3a3a"/><rect x="5.4" y="8.6" width="6.4" height=".9" fill="#3a3a3a"/><rect x="2.6" y="11.4" width="1.6" height="1.6" fill="#3a3a3a"/><rect x="5.4" y="11.8" width="6.4" height=".9" fill="#3a3a3a"/></g>
<text x="92.2" y="250.24" textLength="62.3" lengthAdjust="spacingAndGlyphs" font-size="11" fill="#3d4450" font-weight="normal" font-family="Liberation Sans, sans-serif" >NC Programs</text>
<rect x="77.5" y="260" width="126.1" height="19.6" fill="#eeeeee"/>
<g transform="translate(88 269.9)"><path d="M0 -7.2L7.6 6.6H-7.6Z" fill="#f6d21c" stroke="#c9a20c" stroke-width="1.2" stroke-linejoin="round"/><rect x="-1" y="-3.2" width="2" height="5.4" rx=".6" fill="#111"/><rect x="-1" y="3.2" width="2" height="1.9" fill="#111"/></g>
<g transform="translate(106.4 262)"><rect x=".6" y=".6" width="13.2" height="14.6" fill="#f7f7f7" stroke="#3a3a3a" stroke-width="1.2"/><text x="7.4" y="6.4" font-size="6" font-weight="bold" fill="#1b8fd0" text-anchor="middle" font-family="Liberation Sans, sans-serif">G</text><rect x="2.6" y="8.2" width="1.6" height="1.6" fill="#3a3a3a"/><rect x="5.4" y="8.6" width="6.4" height=".9" fill="#3a3a3a"/><rect x="2.6" y="11.4" width="1.6" height="1.6" fill="#3a3a3a"/><rect x="5.4" y="11.8" width="6.4" height=".9" fill="#3a3a3a"/></g>
<text x="135.3" y="274.04" textLength="59.1" lengthAdjust="spacingAndGlyphs" font-size="11" fill="#3d4450" font-weight="normal" font-family="Liberation Sans, sans-serif" >NCProgram1</text>
<rect x="77.5" y="284" width="126.1" height="19.6" fill="#eeeeee"/>
<g transform="translate(88 293.9)"><path d="M0 -7.2L7.6 6.6H-7.6Z" fill="#f6d21c" stroke="#c9a20c" stroke-width="1.2" stroke-linejoin="round"/><rect x="-1" y="-3.2" width="2" height="5.4" rx=".6" fill="#111"/><rect x="-1" y="3.2" width="2" height="1.9" fill="#111"/></g>
<g transform="translate(106.4 286)"><rect x=".6" y=".6" width="13.2" height="14.6" fill="#f7f7f7" stroke="#3a3a3a" stroke-width="1.2"/><text x="7.4" y="6.4" font-size="6" font-weight="bold" fill="#1b8fd0" text-anchor="middle" font-family="Liberation Sans, sans-serif">G</text><rect x="2.6" y="8.2" width="1.6" height="1.6" fill="#3a3a3a"/><rect x="5.4" y="8.6" width="6.4" height=".9" fill="#3a3a3a"/><rect x="2.6" y="11.4" width="1.6" height="1.6" fill="#3a3a3a"/><rect x="5.4" y="11.8" width="6.4" height=".9" fill="#3a3a3a"/></g>
<text x="135.3" y="298.04" textLength="59.1" lengthAdjust="spacingAndGlyphs" font-size="11" fill="#3d4450" font-weight="normal" font-family="Liberation Sans, sans-serif" >NCProgram2</text>
<defs></defs><path d="M50.6 323.5v-10.6l-10.6 10.6z" fill="url(#gtri)" stroke="#222" stroke-width="1" stroke-linejoin="miter"/>
<rect x="59" y="308.3" width="102.6" height="19.6" fill="#eeeeee"/>
<g transform="translate(70 318.2)"><path d="M-8 0Q-4 -5 0 -5Q4 -5 8 0Q4 5 0 5Q-4 5 -8 0Z" fill="#9e9e9e"/><circle r="2.9" fill="#f2f2f2"/><circle r="1.6" fill="#9e9e9e"/></g>
<g transform="translate(86.7 310.4)" fill="none" stroke="#3a3a3a" stroke-width="1.1" stroke-linejoin="round"><path d="M.6 14V1H7.4V3.6" /><path d="M4.6 5.4Q5.4 1.6 8.6 2.2Q12 2.4 11.8 6" stroke="#8a8a8a" fill="#eaf2fa"/><path d="M.6 14L4.2 6.4H15.4L11.4 14Z" fill="#f6f6f6"/></g>
<text x="117.4" y="322.34" textLength="33.2" lengthAdjust="spacingAndGlyphs" font-size="11" fill="#3d4450" font-weight="normal" font-family="Liberation Sans, sans-serif" >Setups</text>
<defs></defs><path d="M69 347.4v-10.6l-10.6 10.6z" fill="url(#gtri)" stroke="#222" stroke-width="1" stroke-linejoin="miter"/>
<rect x="77.5" y="332.2" width="131.4" height="19.6" fill="#eeeeee"/>
<g transform="translate(88 342.1)"><path d="M-8 0Q-4 -5 0 -5Q4 -5 8 0Q4 5 0 5Q-4 5 -8 0Z" fill="#9e9e9e"/><circle r="2.9" fill="#f2f2f2"/><circle r="1.6" fill="#9e9e9e"/></g>
<g transform="translate(105 334.3)" fill="none" stroke="#3a3a3a" stroke-width="1.1" stroke-linejoin="round"><path d="M.6 14V1H7.4V3.6" /><path d="M4.6 5.4Q5.4 1.6 8.6 2.2Q12 2.4 11.8 6" stroke="#8a8a8a" fill="#eaf2fa"/><path d="M.6 14L4.2 6.4H15.4L11.4 14Z" fill="#f6f6f6"/></g>
<rect x="126.9" y="334.4" width="57" height="15.4" fill="#8f8f8f"/>
<text x="136" y="346.14" textLength="36.9" lengthAdjust="spacingAndGlyphs" font-size="11" fill="#fff" font-weight="bold" font-family="Liberation Sans, sans-serif" >Setup1</text>
<circle cx="194.4" cy="342.1" r="5.9" fill="#fff" stroke="#222" stroke-width="1.2"/><circle cx="194.4" cy="342.1" r="2.5" fill="#222"/>
<path d="M77.8 360.2v11.4l8.6 -5.7z" fill="#fff" stroke="#222" stroke-width="1.4" stroke-linejoin="round"/>
<rect x="95" y="356" width="175.6" height="19.6" fill="#eeeeee"/>
<g transform="translate(105.8 365.9)" opacity=".55"><path d="M-7.5 0Q-4 -4.6 0 -4.6Q4 -4.6 7.5 0Q4 4.6 0 4.6Q-4 4.6 -7.5 0Z" fill="#d0d0d0"/><circle r="2.6" fill="#f2f2f2"/><path d="M-5 -5L5 5" stroke="#efefef" stroke-width="2.4"/><path d="M-4.2 -5.2L5.4 4.4" stroke="#c4c4c4" stroke-width="1.3"/></g>
<g transform="translate(131.1 365.9)"><path d="M0 -7.2L7.6 6.6H-7.6Z" fill="#f6d21c" stroke="#c9a20c" stroke-width="1.2" stroke-linejoin="round"/><rect x="-1" y="-3.2" width="2" height="5.4" rx=".6" fill="#111"/><rect x="-1" y="3.2" width="2" height="1.9" fill="#111"/></g>
<g transform="translate(148.3 357.9)"><path d="M8 2.2L15.4 8.4L8 14.6L.6 8.4Z" fill="none" stroke="#2b8fda" stroke-width="1"/><path d="M8 1L13.6 5.4V8L8 12.4L2.4 8V5.4Z" fill="#4f9fe0"/><path d="M8 1L13.6 5.4L8 9.8L2.4 5.4Z" fill="#f4f8fc" stroke="#3a6fa8" stroke-width=".7"/></g>
<text x="178.6" y="370.04" textLength="80.2" lengthAdjust="spacingAndGlyphs" font-size="11" fill="#3d4450" font-weight="normal" font-family="Liberation Sans, sans-serif" >[T1] 2D Contour2</text>
<path d="M77.8 384.3v11.4l8.6 -5.7z" fill="#fff" stroke="#222" stroke-width="1.4" stroke-linejoin="round"/>
<rect x="95" y="380.1" width="152" height="19.6" fill="#eeeeee"/>
<g transform="translate(105.8 390)" opacity=".55"><path d="M-7.5 0Q-4 -4.6 0 -4.6Q4 -4.6 7.5 0Q4 4.6 0 4.6Q-4 4.6 -7.5 0Z" fill="#d0d0d0"/><circle r="2.6" fill="#f2f2f2"/><path d="M-5 -5L5 5" stroke="#efefef" stroke-width="2.4"/><path d="M-4.2 -5.2L5.4 4.4" stroke="#c4c4c4" stroke-width="1.3"/></g>
<g transform="translate(131.1 390)"><path d="M0 -7.2L7.6 6.6H-7.6Z" fill="#f6d21c" stroke="#c9a20c" stroke-width="1.2" stroke-linejoin="round"/><rect x="-1" y="-3.2" width="2" height="5.4" rx=".6" fill="#111"/><rect x="-1" y="3.2" width="2" height="1.9" fill="#111"/></g>
<g transform="translate(148.3 382)"><path d="M1 4.4L4.6 1H15V11L11.4 15H1Z" fill="#e8e8e8" stroke="#3a3a3a" stroke-width="1" stroke-linejoin="round"/><path d="M1.6 4.8H11.2V14.4H1.6Z" fill="#5aa6e6"/><path d="M2 14Q4 12 4.6 7Q5 2.6 6.6 2.8Q7.6 3 7 8Q6.6 13 8 13Q9.4 12.6 10 7Q10.6 2.6 12 2.6Q13 3 12.4 8" fill="none" stroke="#173e6e" stroke-width="1"/></g>
<text x="178.6" y="394.14" textLength="59.2" lengthAdjust="spacingAndGlyphs" font-size="11" fill="#3d4450" font-weight="normal" font-family="Liberation Sans, sans-serif" >[T1] Parallel1</text>
<path d="M77.8 408.5v11.4l8.6 -5.7z" fill="#fff" stroke="#222" stroke-width="1.4" stroke-linejoin="round"/>
<rect x="95" y="404.3" width="155" height="19.6" fill="#eeeeee"/>
<g transform="translate(105.8 414.2)" opacity=".55"><path d="M-7.5 0Q-4 -4.6 0 -4.6Q4 -4.6 7.5 0Q4 4.6 0 4.6Q-4 4.6 -7.5 0Z" fill="#d0d0d0"/><circle r="2.6" fill="#f2f2f2"/><path d="M-5 -5L5 5" stroke="#efefef" stroke-width="2.4"/><path d="M-4.2 -5.2L5.4 4.4" stroke="#c4c4c4" stroke-width="1.3"/></g>
<g transform="translate(131.1 414.2)"><path d="M0 -7.2L7.6 6.6H-7.6Z" fill="#f6d21c" stroke="#c9a20c" stroke-width="1.2" stroke-linejoin="round"/><rect x="-1" y="-3.2" width="2" height="5.4" rx=".6" fill="#111"/><rect x="-1" y="3.2" width="2" height="1.9" fill="#111"/></g>
<g transform="translate(148.3 406.2)"><path d="M1 4.4L4.6 1H15V11L11.4 15H1Z" fill="#e8e8e8" stroke="#3a3a3a" stroke-width="1" stroke-linejoin="round"/><path d="M1.6 4.8H11.2V14.4H1.6Z" fill="#5aa6e6"/><path d="M2 14Q4 12 4.6 7Q5 2.6 6.6 2.8Q7.6 3 7 8Q6.6 13 8 13Q9.4 12.6 10 7Q10.6 2.6 12 2.6Q13 3 12.4 8" fill="none" stroke="#173e6e" stroke-width="1"/></g>
<text x="178.6" y="418.34" textLength="60" lengthAdjust="spacingAndGlyphs" font-size="11" fill="#3d4450" font-weight="normal" font-family="Liberation Sans, sans-serif" >[T2] Parallel2</text>
<path d="M77.8 432.4v11.4l8.6 -5.7z" fill="#fff" stroke="#222" stroke-width="1.4" stroke-linejoin="round"/>
<rect x="95" y="428.2" width="159.3" height="19.6" fill="#eeeeee"/>
<g transform="translate(105.8 438.1)" opacity=".55"><path d="M-7.5 0Q-4 -4.6 0 -4.6Q4 -4.6 7.5 0Q4 4.6 0 4.6Q-4 4.6 -7.5 0Z" fill="#d0d0d0"/><circle r="2.6" fill="#f2f2f2"/><path d="M-5 -5L5 5" stroke="#efefef" stroke-width="2.4"/><path d="M-4.2 -5.2L5.4 4.4" stroke="#c4c4c4" stroke-width="1.3"/></g>
<g transform="translate(131.1 438.1)"><path d="M0 -7.2L7.6 6.6H-7.6Z" fill="#f6d21c" stroke="#c9a20c" stroke-width="1.2" stroke-linejoin="round"/><rect x="-1" y="-3.2" width="2" height="5.4" rx=".6" fill="#111"/><rect x="-1" y="3.2" width="2" height="1.9" fill="#111"/></g>
<g transform="translate(148.3 430.1)"><path d="M1 4L4 1H15V11.6L12 15H1Z" fill="#ececec" stroke="#3a3a3a" stroke-width="1" stroke-linejoin="round"/><path d="M4.4 4.2L6 2.4H13V11H4.4Z" fill="#5aa6e6"/><path d="M2.4 8.4Q5 6 8 6.2L13.4 5.8M4.6 7.4L12.6 7.2M2.2 12.2Q5 9.6 8 9.8L13.4 9.4M4.4 11L12.6 10.8" fill="none" stroke="#173e6e" stroke-width="1"/></g>
<text x="178.6" y="442.24" textLength="67.1" lengthAdjust="spacingAndGlyphs" font-size="11" fill="#3d4450" font-weight="normal" font-family="Liberation Sans, sans-serif" >[T2] Adaptive1</text>
</svg>
<div id="lborder"></div>
</body></html>
